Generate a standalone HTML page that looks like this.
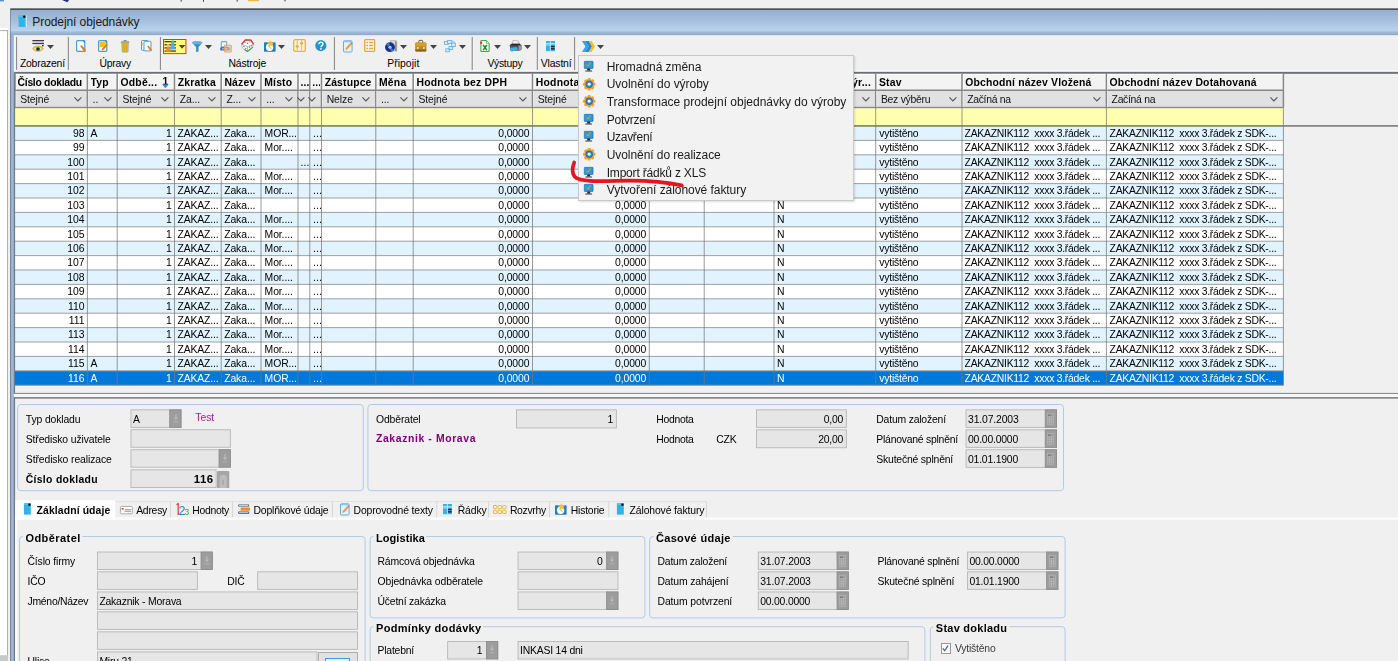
<!DOCTYPE html>
<html><head><meta charset="utf-8"><title>Prodejní objednávky</title>
<style>
html,body{margin:0;padding:0;}
body{width:1398px;height:661px;overflow:hidden;background:#f0f0f0;position:relative;font-family:"Liberation Sans",sans-serif;}
#r{position:absolute;left:0;top:0;width:1398px;height:661px;overflow:hidden;filter:blur(0.35px);}
#r div,#r svg{position:absolute;box-sizing:content-box;}
#r svg{overflow:visible;display:block;}
</style></head><body><div id="r">
<svg style="left:0;top:0" width="1398" height="661" viewBox="0 0 1398 661"><rect x="0.00" y="0.00" width="4.00" height="1.40" fill="#5a8fd0"/></svg>
<svg style="left:62.00px;top:0.00px" width="7.00" height="2.20" viewBox="0 0 7 2.2"><path d="M0,0h7l-1.5,2.2z" fill="#1c2f8a"/></svg>
<svg style="left:0;top:0" width="1398" height="661" viewBox="0 0 1398 661"><rect x="180.60" y="0.00" width="1.20" height="1.60" fill="#555"/><rect x="203.00" y="0.00" width="1.00" height="1.80" fill="#444"/><rect x="236.60" y="0.00" width="1.20" height="1.60" fill="#555"/><rect x="248.00" y="0.00" width="11.00" height="1.20" fill="#f0b840"/><rect x="284.40" y="0.00" width="1.20" height="1.40" fill="#555"/><rect x="0.00" y="28.00" width="8.00" height="2.20" fill="#fff"/><rect x="0.00" y="30.20" width="7.40" height="625.00" fill="#fff"/><rect x="0.00" y="30.20" width="8.00" height="0.90" fill="#a6a6a6"/><rect x="7.00" y="30.20" width="0.90" height="625.00" fill="#a6a6a6"/><rect x="0.00" y="655.20" width="8.00" height="6.00" fill="#c8c8c8"/></svg>
<div style="left:10.30px;top:9.00px;width:3.60px;height:652.00px;background:linear-gradient(90deg,#8a9fc0 0%,#97b1d3 35%,#a6c0e1 100%);"></div>
<div style="left:10.30px;top:9.60px;width:1388.00px;height:21.90px;background:linear-gradient(#96b0d2 0%,#a3bcdb 45%,#bad4ee 100%);"></div>
<div style="left:10.30px;top:31.40px;width:1388.00px;height:4.10px;background:linear-gradient(#aac4e2 0%,#9cb6d6 50%,#8fa8c9 100%);"></div>
<svg style="left:0;top:0" width="1398" height="661" viewBox="0 0 1398 661"><rect x="10.30" y="8.30" width="1388.00" height="1.70" fill="#4d5157"/><rect x="10.20" y="9.50" width="0.80" height="652.00" fill="rgba(90,100,120,0.55)"/></svg>
<svg style="left:18.00px;top:14.50px" width="9.20" height="11.90" viewBox="0 0 7.8 11.6"><rect x="0" y="0" width="7" height="11.6" fill="#2eb5e8"/><rect x="0.2" y="0.2" width="3.6" height="1.6" fill="#58c6ee"/><rect x="7" y="0.4" width="0.8" height="11.2" fill="#f4f8fb"/><circle cx="5.6" cy="1.7" r="1.2" fill="#101010"/></svg>
<div style="top:14.74px;font-size:12px;line-height:15.6px;color:#1a1a1a;letter-spacing:-0.08px;white-space:pre;left:32.30px;">Prodejní objednávky</div>
<svg style="left:0;top:0" width="1398" height="661" viewBox="0 0 1398 661"><rect x="14.10" y="35.50" width="1384.00" height="38.00" fill="#f0f0f0"/><rect x="14.10" y="35.40" width="1384.00" height="0.60" fill="#dcdcdc"/><rect x="14.10" y="35.60" width="1.00" height="37.00" fill="#fafafa"/><rect x="16.10" y="37.00" width="1.00" height="33.00" fill="#828282"/><rect x="67.80" y="37.00" width="1.00" height="33.00" fill="#828282"/><rect x="159.90" y="37.00" width="1.00" height="33.00" fill="#828282"/><rect x="333.90" y="37.00" width="1.00" height="33.00" fill="#828282"/><rect x="471.70" y="37.00" width="1.00" height="33.00" fill="#828282"/><rect x="536.80" y="37.00" width="1.00" height="33.00" fill="#828282"/><rect x="574.10" y="37.00" width="1.00" height="33.00" fill="#828282"/></svg>
<div style="top:56.94px;font-size:10.4px;line-height:13.52px;color:#000;letter-spacing:-0.203px;white-space:pre;left:19.90px;">Zobrazení</div>
<div style="top:56.94px;font-size:10.4px;line-height:13.52px;color:#000;letter-spacing:-0.24px;white-space:pre;left:99.40px;">Úpravy</div>
<div style="top:56.94px;font-size:10.4px;line-height:13.52px;color:#000;letter-spacing:-0.116px;white-space:pre;left:228.40px;">Nástroje</div>
<div style="top:56.94px;font-size:10.4px;line-height:13.52px;color:#000;letter-spacing:0.051px;white-space:pre;left:387.20px;">Připojit</div>
<div style="top:56.94px;font-size:10.4px;line-height:13.52px;color:#000;letter-spacing:-0.285px;white-space:pre;left:487.40px;">Výstupy</div>
<div style="top:56.94px;font-size:10.4px;line-height:13.52px;color:#000;letter-spacing:-0.156px;white-space:pre;left:540.80px;">Vlastní</div>
<svg style="left:32.20px;top:39.90px" width="12.00" height="13.00" viewBox="0 0 12 13"><rect x="0.4" y="0" width="11.6" height="1.3" fill="#3c3c3c"/><rect x="0.4" y="2.8" width="11.6" height="1.3" fill="#3c3c3c"/><path d="M0.2,8.6c2.4,-4.2 9,-4.2 11.6,-0.2c-2.6,4.6 -9.2,4.4 -11.6,0.2z" fill="#d4b236"/><path d="M1.6,8.8c2,-2.6 6.8,-2.6 8.8,0c-2,2.8 -6.8,2.8 -8.8,0z" fill="#eadb9a"/><circle cx="6" cy="9.1" r="2.0" fill="#1f5f82"/><circle cx="6" cy="9.1" r="1.0" fill="#0a1a24"/><circle cx="10.8" cy="5.6" r="0.9" fill="#222"/></svg>
<svg style="left:47.00px;top:45.00px" width="7.00" height="4.00" viewBox="0 0 7 4"><path d="M0,0H7L3.5,4Z" fill="#444"/></svg>
<svg style="left:75.80px;top:40.10px" width="10.00" height="12.00" viewBox="0 0 10 12"><rect x="0.6" y="0.6" width="8.2" height="10.8" rx="1" fill="#fff" stroke="#4a9fd6" stroke-width="1.2"/><path d="M6.5,0.6h2.3v2.6z" fill="#2b8ccf"/><path d="M4.4,6.4l1.3,-1.2l4,4.6l-0.1,2.2l-1.4,-0.6z" fill="#e07a1c"/><path d="M3.8,4.9l1.9,0.3l-1.3,1.2z" fill="#f3c98a"/></svg>
<svg style="left:97.50px;top:40.10px" width="10.00" height="12.00" viewBox="0 0 10 12"><rect x="0.6" y="0.6" width="8.2" height="10.8" rx="1" fill="#fff" stroke="#4a9fd6" stroke-width="1.2"/><path d="M1.4,1.4h5.4l1.4,1.6v4.2h-6.8z" fill="#f8c21c"/><path d="M6.5,0.6h2.3v2.6z" fill="#2b8ccf"/><path d="M3.6,10.6l0.5,-1.9l4.6,-4.9l1.1,1.3l-4.4,4.9z" fill="#e07a1c"/></svg>
<svg style="left:120.80px;top:39.80px" width="8.20" height="12.40" viewBox="0 0 8.2 12.4"><rect x="2.8" y="0" width="2.6" height="1.4" fill="#5a8fc0"/><rect x="0.2" y="1.3" width="7.8" height="1.8" rx="0.8" fill="#e8b820" stroke="#5a8fc0" stroke-width="0.5"/><path d="M0.8,3.2h6.6l-0.3,8.4a0.6,0.6 0 0 1 -0.6,0.6h-4.8a0.6,0.6 0 0 1 -0.6,-0.6z" fill="#ecbc22" stroke="#6a94b8" stroke-width="0.5"/><rect x="2.6" y="4.4" width="0.8" height="6.4" fill="#c59a1c"/><rect x="4.8" y="4.4" width="0.8" height="6.4" fill="#c59a1c"/></svg>
<svg style="left:140.80px;top:40.10px" width="10.80" height="11.60" viewBox="0 0 10.8 11.6"><rect x="0.5" y="0.5" width="6.6" height="9.8" rx="0.8" fill="#eaf3fb" stroke="#4a9fd6" stroke-width="1"/><rect x="0.9" y="3" width="0.8" height="2.4" fill="#f2c230"/><rect x="3" y="1.3" width="7" height="9.6" rx="0.8" fill="#fff" stroke="#4a9fd6" stroke-width="1"/><path d="M6.2,6.6l1.2,-1l3.2,3.8l-0.1,1.9l-1.3,-0.5z" fill="#e07a1c"/></svg>
<svg style="left:163.10px;top:38.80px" width="23.40" height="15.10" viewBox="0 0 23.4 15.1"><rect x="0.5" y="0.5" width="22.4" height="14.1" fill="#ffff7d" stroke="#ff2a1a" stroke-width="1"/><g fill="#1a1a1a"><rect x="1.4" y="2.2" width="11.6" height="1.1"/><rect x="1.4" y="5.3" width="11.6" height="1.1"/><rect x="1.4" y="8.4" width="11.6" height="1.1"/><rect x="1.4" y="11.5" width="11.6" height="1.1"/></g><path d="M4.2,7.6h2l0.4,1.6l1.4,3.6h-5.6l1.4,-3.6z" fill="#f28c28"/><circle cx="5.2" cy="6.6" r="1.5" fill="#f7b98a"/><path d="M8.6,3.6h2.2l0.4,2.2l1.4,4.6h-5.8l1.4,-4.6z" fill="#4ab0e6"/><circle cx="9.7" cy="2.9" r="1.6" fill="#4ab0e6"/><path d="M15.8,6.1h6.6l-3.3,3.6z" fill="#444"/></svg>
<svg style="left:191.70px;top:40.50px" width="10.60" height="11.20" viewBox="0 0 10.6 11.2"><path d="M0.2,1.6c0,-1.4 10.2,-1.4 10.2,0c0,1.2 -3.9,3.6 -3.9,5.2v3.6l-2.4,0.6v-4.2c0,-1.6 -3.9,-4 -3.9,-5.2z" fill="#2f8fd2"/><ellipse cx="5.3" cy="1.5" rx="4.9" ry="1.2" fill="#5cb4ea"/><path d="M0.6,2.2c1.5,1 8,1 9.4,0" stroke="#e8c040" stroke-width="0.5" fill="none"/></svg>
<svg style="left:205.30px;top:45.00px" width="7.00" height="4.00" viewBox="0 0 7 4"><path d="M0,0H7L3.5,4Z" fill="#444"/></svg>
<svg style="left:220.20px;top:40.60px" width="11.80" height="11.60" viewBox="0 0 11.8 11.6"><rect x="1.3" y="0.6" width="5.4" height="5.4" rx="0.6" fill="#eef5fd" stroke="#6aa6ee" stroke-width="1.1"/><rect x="0.2" y="6" width="9.6" height="3.6" rx="1.2" fill="#4470c4"/><rect x="2" y="7.2" width="5.6" height="1.2" fill="#a9c0ea"/><rect x="4.6" y="4.2" width="6.6" height="6.8" rx="0.8" fill="#f6c99a" fill-opacity="0.55" stroke="#e9a55a" stroke-width="1.1"/></svg>
<svg style="left:241.30px;top:39.30px" width="13.20" height="13.00" viewBox="0 0 13.2 13"><path d="M4.4,0.8l5.6,0.4l2.6,4.2l-1.4,3.6l-4.6,3.4l-5,-3.2l-1,-4z" fill="#fbfbfb" stroke="#9a9a9a" stroke-width="0.6"/><path d="M0.6,5.2l3.8,-4.4l5.6,0.4l2.6,4.2" fill="none" stroke="#cf3a3a" stroke-width="1.3"/><path d="M0.6,5.2l6,2.4l6,-2.2M6.6,7.6v4.8" stroke="#8a8a8a" stroke-width="0.6" fill="none"/><g fill="#6a6a6a"><circle cx="4" cy="3.2" r="0.6"/><circle cx="6.6" cy="4.4" r="0.6"/><circle cx="9" cy="3" r="0.6"/><circle cx="3" cy="7.4" r="0.6"/><circle cx="4.8" cy="9.4" r="0.6"/><circle cx="8.6" cy="8.2" r="0.6"/><circle cx="10.4" cy="6.8" r="0.6"/></g><path d="M3.6,10.6l2.8,1.9l5.4,-4.4" stroke="#3aa34a" stroke-width="1.2" fill="none"/></svg>
<svg style="left:263.60px;top:40.30px" width="11.60" height="11.80" viewBox="0 0 11.6 11.8"><rect x="0" y="2.2" width="11.6" height="9.6" rx="0.8" fill="#1f7fc4"/><circle cx="5.6" cy="7.2" r="3.7" fill="#fff"/><path d="M5.6,4.6v2.8l2,1.2" stroke="#8a8a8a" stroke-width="0.6" fill="none"/><path d="M6.2,0l1.3,2.2l2.6,0.3l-1.8,1.8l0.6,2.6l-2.4,-1.3l-2.6,1.5l0.8,-2.8l-1.8,-1.8l2.4,-0.3z" fill="#fbc02d"/></svg>
<svg style="left:278.20px;top:45.00px" width="7.00" height="4.00" viewBox="0 0 7 4"><path d="M0,0H7L3.5,4Z" fill="#444"/></svg>
<svg style="left:292.70px;top:39.30px" width="13.00" height="13.00" viewBox="0 0 13 13"><rect x="0.7" y="0.7" width="11.6" height="11.6" rx="1.6" fill="#fbf3dc" stroke="#e3b23c" stroke-width="1.3"/><path d="M4.2,1.4v10M8.6,1.4v10" stroke="#e3b23c" stroke-width="0.9"/><rect x="2.4" y="6.4" width="3.6" height="2" rx="1" fill="#e3b23c"/><rect x="6.8" y="3.2" width="3.6" height="2" rx="1" fill="#e3b23c"/></svg>
<svg style="left:315.10px;top:40.30px" width="11.60" height="11.20" viewBox="0 0 11.6 11.2"><circle cx="5.8" cy="5.6" r="5.6" fill="#1e96d6"/><path d="M3.9,4.2c0,-2.6 4,-2.6 4,-0.2c0,1.6 -1.9,1.6 -1.9,3.2" stroke="#fff" stroke-width="1.5" fill="none"/><rect x="5.2" y="8.1" width="1.5" height="1.5" fill="#fff"/></svg>
<svg style="left:343.40px;top:39.50px" width="9.60" height="12.50" viewBox="0 0 9.6 12.5"><rect x="0.5" y="0.8" width="8.6" height="11.2" rx="1" fill="#e6f1fb" stroke="#6da8de" stroke-width="1"/><rect x="1" y="0.6" width="7.6" height="1.7" fill="#9cc0e4"/><path d="M2.6,9.6l0.6,-2l4.2,-4.6l1.5,1.3l-4.2,4.7z" fill="#f0a030"/><path d="M7.4,3l1.5,1.3l0.5,-0.8l-1.3,-1.2z" fill="#e05a3a"/><path d="M2.6,9.6l0.3,-1l0.7,0.7z" fill="#555"/></svg>
<svg style="left:363.80px;top:39.40px" width="11.30" height="13.00" viewBox="0 0 11.3 13"><rect x="0.7" y="0.7" width="9.9" height="11.6" rx="0.8" fill="#fdf6e6" stroke="#e3a93c" stroke-width="1.3"/><g fill="#e3a93c"><rect x="2.4" y="2.8" width="1.6" height="1.4"/><rect x="5" y="2.8" width="4" height="1.4"/><rect x="2.4" y="5.8" width="1.6" height="1.4"/><rect x="5" y="5.8" width="4" height="1.4"/><rect x="2.4" y="8.8" width="1.6" height="1.4"/><rect x="5" y="8.8" width="4" height="1.4"/></g></svg>
<svg style="left:384.90px;top:40.00px" width="12.20" height="12.20" viewBox="0 0 12.2 12.2"><path d="M5.2,0.6h5.6a1,1 0 0 1 1,1v9.4h-3z" fill="#d8d8d8" stroke="#9a9a9a" stroke-width="0.5"/><rect x="10" y="1.4" width="1.6" height="9.8" fill="#8a8a8a"/><circle cx="5" cy="7.2" r="4.9" fill="#1b2f8a"/><path d="M5,7.2l-4,-2.8a4.9,4.9 0 0 1 3,-2z" fill="#3f78d8"/><path d="M5,7.2l4,2.8a4.9,4.9 0 0 1 -3,2z" fill="#3f78d8"/><circle cx="5" cy="7.2" r="1.5" fill="#e8e8f4"/><circle cx="5" cy="7.2" r="0.6" fill="#666"/></svg>
<svg style="left:400.00px;top:45.00px" width="7.00" height="4.00" viewBox="0 0 7 4"><path d="M0,0H7L3.5,4Z" fill="#444"/></svg>
<svg style="left:415.00px;top:40.00px" width="11.60" height="11.80" viewBox="0 0 11.6 11.8"><path d="M3.8,2.8v-1.4a1,1 0 0 1 1,-1h2a1,1 0 0 1 1,1v1.4" stroke="#6a4e10" stroke-width="1" fill="none"/><rect x="0.2" y="2.6" width="11.2" height="8.8" rx="1.2" fill="#b88a1c"/><rect x="0.2" y="2.6" width="11.2" height="3.6" rx="1.2" fill="#d0a030"/><rect x="0.2" y="9.6" width="11.2" height="1.8" rx="0.8" fill="#8a6410"/><rect x="2" y="7" width="1.6" height="2" fill="#cfe4f2"/><rect x="8" y="7" width="1.6" height="2" fill="#cfe4f2"/></svg>
<svg style="left:429.50px;top:45.00px" width="7.00" height="4.00" viewBox="0 0 7 4"><path d="M0,0H7L3.5,4Z" fill="#444"/></svg>
<svg style="left:444.20px;top:40.00px" width="12.00" height="12.20" viewBox="0 0 12 12.2"><rect x="0.4" y="1.4" width="4" height="3" fill="#d6ebfa" stroke="#62aee6" stroke-width="0.8"/><rect x="3.6" y="0.4" width="4.2" height="3" fill="#d6ebfa" stroke="#62aee6" stroke-width="0.8"/><rect x="7.4" y="3.2" width="4" height="3.4" fill="#d6ebfa" stroke="#62aee6" stroke-width="0.8"/><rect x="5" y="6.6" width="3.8" height="3" fill="#d6ebfa" stroke="#62aee6" stroke-width="0.8"/><rect x="1.8" y="8.8" width="3.6" height="3" fill="#d6ebfa" stroke="#62aee6" stroke-width="0.8"/><path d="M8,1.8h2.2v1.4M9.4,6.6l-1.6,1M5,9.2l-0.8,0.6" stroke="#62aee6" stroke-width="0.7" fill="none"/></svg>
<svg style="left:459.10px;top:45.00px" width="7.00" height="4.00" viewBox="0 0 7 4"><path d="M0,0H7L3.5,4Z" fill="#444"/></svg>
<svg style="left:479.50px;top:40.00px" width="9.60" height="12.00" viewBox="0 0 9.6 12"><path d="M0.9,0.6h5.6l2.6,2.6v8.2h-8.2z" fill="#fff" stroke="#3c9c3c" stroke-width="1"/><path d="M6.5,0.6v2.6h2.6" fill="#dff0df" stroke="#3c9c3c" stroke-width="0.6"/><path d="M3.2,5l3.6,5.2M6.8,5l-3.6,5.2" stroke="#1f8a2f" stroke-width="1.5"/><circle cx="1.2" cy="2.8" r="1.1" fill="#d8232a"/></svg>
<svg style="left:494.00px;top:45.00px" width="7.00" height="4.00" viewBox="0 0 7 4"><path d="M0,0H7L3.5,4Z" fill="#444"/></svg>
<svg style="left:509.00px;top:40.00px" width="13.00" height="12.00" viewBox="0 0 13 12"><path d="M4,0.4l5.4,0.6l1,3.6h-7.4z" fill="#f2f2f2" stroke="#8a8a8a" stroke-width="0.5"/><path d="M0.6,5.2l2.4,-1.4h7.6l2,1.8v3.6l-1.6,1.6h-9.4z" fill="#555"/><path d="M0.6,5.2l2.4,-1.4h7.6l2,1.8h-9.8z" fill="#2b2b2b"/><path d="M9.6,5.6h3v3.6l-1.6,1.6h-1.4z" fill="#9a9a9a"/><path d="M1.8,7.8l5.6,-0.8l1.6,2.4l-6.2,2.4l-2,-1.6z" fill="#2fb4e4"/></svg>
<svg style="left:524.00px;top:45.00px" width="7.00" height="4.00" viewBox="0 0 7 4"><path d="M0,0H7L3.5,4Z" fill="#444"/></svg>
<svg style="left:546.00px;top:40.80px" width="9.50" height="10.20" viewBox="0 0 9.5 10.2"><rect x="0" y="0" width="9" height="10.2" fill="#2db6e8"/><path d="M0,2.6h9M0,4h9M4.4,0v10.2" stroke="#e8f6fd" stroke-width="0.7"/><rect x="5" y="4.6" width="3.6" height="1.6" fill="#14303c"/><rect x="5" y="7" width="3.6" height="1.6" fill="#14303c"/><rect x="9" y="0.3" width="0.5" height="10" fill="#fff"/></svg>
<svg style="left:581.60px;top:40.80px" width="13.00" height="11.00" viewBox="0 0 13 11"><path d="M0,0h3.4l3.4,5.5l-3.4,5.5h-3.4l3.4,-5.5z" fill="#3aa0ea"/><path d="M3.3,0h3.4l3.4,5.5l-3.4,5.5h-3.4l3.4,-5.5z" fill="#2a84d0"/><path d="M6.6,0h3l3.4,5.5l-3.4,5.5h-3l3.4,-5.5z" fill="#f4c020"/></svg>
<svg style="left:596.60px;top:45.00px" width="7.00" height="4.00" viewBox="0 0 7 4"><path d="M0,0H7L3.5,4Z" fill="#444"/></svg>
<svg style="left:0;top:0" width="1398" height="661" viewBox="0 0 1398 661"><rect x="15.00" y="73.60" width="1268.40" height="16.60" fill="#f3f3f3"/><rect x="15.00" y="90.20" width="1268.40" height="17.00" fill="#e1e1e1"/><rect x="15.00" y="107.20" width="1268.40" height="18.40" fill="#ffffae"/><rect x="15.00" y="126.00" width="1268.40" height="14.40" fill="#e0f3ff"/><rect x="15.00" y="140.40" width="1268.40" height="14.40" fill="#ffffff"/><rect x="15.00" y="154.80" width="1268.40" height="14.40" fill="#e0f3ff"/><rect x="15.00" y="169.20" width="1268.40" height="14.40" fill="#ffffff"/><rect x="15.00" y="183.60" width="1268.40" height="14.40" fill="#e0f3ff"/><rect x="15.00" y="198.00" width="1268.40" height="14.40" fill="#ffffff"/><rect x="15.00" y="212.40" width="1268.40" height="14.40" fill="#e0f3ff"/><rect x="15.00" y="226.80" width="1268.40" height="14.40" fill="#ffffff"/><rect x="15.00" y="241.20" width="1268.40" height="14.40" fill="#e0f3ff"/><rect x="15.00" y="255.60" width="1268.40" height="14.40" fill="#ffffff"/><rect x="15.00" y="270.00" width="1268.40" height="14.40" fill="#e0f3ff"/><rect x="15.00" y="284.40" width="1268.40" height="14.40" fill="#ffffff"/><rect x="15.00" y="298.80" width="1268.40" height="14.40" fill="#e0f3ff"/><rect x="15.00" y="313.20" width="1268.40" height="14.40" fill="#ffffff"/><rect x="15.00" y="327.60" width="1268.40" height="14.40" fill="#e0f3ff"/><rect x="15.00" y="342.00" width="1268.40" height="14.40" fill="#ffffff"/><rect x="15.00" y="356.40" width="1268.40" height="14.40" fill="#e0f3ff"/><rect x="15.00" y="370.80" width="1268.40" height="14.40" fill="#0078d7"/><rect x="14.30" y="70.10" width="1384.00" height="1.00" fill="#f8f8f8"/><rect x="14.30" y="71.90" width="1384.00" height="1.90" fill="#6c7074"/><rect x="15.00" y="89.50" width="1268.40" height="1.50" fill="#868686"/><rect x="15.00" y="106.80" width="1268.40" height="1.40" fill="#8a8a8a"/><rect x="15.00" y="125.00" width="1383.00" height="1.80" fill="#888888"/><rect x="15.00" y="139.90" width="1268.40" height="1.00" fill="#a0a0a0"/><rect x="15.00" y="154.30" width="1268.40" height="1.00" fill="#a0a0a0"/><rect x="15.00" y="168.70" width="1268.40" height="1.00" fill="#a0a0a0"/><rect x="15.00" y="183.10" width="1268.40" height="1.00" fill="#a0a0a0"/><rect x="15.00" y="197.50" width="1268.40" height="1.00" fill="#a0a0a0"/><rect x="15.00" y="211.90" width="1268.40" height="1.00" fill="#a0a0a0"/><rect x="15.00" y="226.30" width="1268.40" height="1.00" fill="#a0a0a0"/><rect x="15.00" y="240.70" width="1268.40" height="1.00" fill="#a0a0a0"/><rect x="15.00" y="255.10" width="1268.40" height="1.00" fill="#a0a0a0"/><rect x="15.00" y="269.50" width="1268.40" height="1.00" fill="#a0a0a0"/><rect x="15.00" y="283.90" width="1268.40" height="1.00" fill="#a0a0a0"/><rect x="15.00" y="298.30" width="1268.40" height="1.00" fill="#a0a0a0"/><rect x="15.00" y="312.70" width="1268.40" height="1.00" fill="#a0a0a0"/><rect x="15.00" y="327.10" width="1268.40" height="1.00" fill="#a0a0a0"/><rect x="15.00" y="341.50" width="1268.40" height="1.00" fill="#a0a0a0"/><rect x="15.00" y="355.90" width="1268.40" height="1.00" fill="#a0a0a0"/><rect x="15.00" y="370.30" width="1268.40" height="1.00" fill="#a0a0a0"/><rect x="15.00" y="384.70" width="1268.40" height="1.00" fill="#8c8c8c"/><rect x="15.60" y="73.90" width="71.40" height="1.00" fill="#ffffff"/><rect x="15.60" y="73.90" width="1.00" height="15.60" fill="#ffffff"/><rect x="88.00" y="73.90" width="28.80" height="1.00" fill="#ffffff"/><rect x="88.00" y="73.90" width="1.00" height="15.60" fill="#ffffff"/><rect x="117.80" y="73.90" width="56.30" height="1.00" fill="#ffffff"/><rect x="117.80" y="73.90" width="1.00" height="15.60" fill="#ffffff"/><rect x="175.10" y="73.90" width="45.70" height="1.00" fill="#ffffff"/><rect x="175.10" y="73.90" width="1.00" height="15.60" fill="#ffffff"/><rect x="221.80" y="73.90" width="38.80" height="1.00" fill="#ffffff"/><rect x="221.80" y="73.90" width="1.00" height="15.60" fill="#ffffff"/><rect x="261.60" y="73.90" width="36.00" height="1.00" fill="#ffffff"/><rect x="261.60" y="73.90" width="1.00" height="15.60" fill="#ffffff"/><rect x="298.60" y="73.90" width="10.80" height="1.00" fill="#ffffff"/><rect x="298.60" y="73.90" width="1.00" height="15.60" fill="#ffffff"/><rect x="310.40" y="73.90" width="10.70" height="1.00" fill="#ffffff"/><rect x="310.40" y="73.90" width="1.00" height="15.60" fill="#ffffff"/><rect x="322.10" y="73.90" width="53.30" height="1.00" fill="#ffffff"/><rect x="322.10" y="73.90" width="1.00" height="15.60" fill="#ffffff"/><rect x="376.40" y="73.90" width="36.40" height="1.00" fill="#ffffff"/><rect x="376.40" y="73.90" width="1.00" height="15.60" fill="#ffffff"/><rect x="413.80" y="73.90" width="118.30" height="1.00" fill="#ffffff"/><rect x="413.80" y="73.90" width="1.00" height="15.60" fill="#ffffff"/><rect x="533.10" y="73.90" width="115.80" height="1.00" fill="#ffffff"/><rect x="533.10" y="73.90" width="1.00" height="15.60" fill="#ffffff"/><rect x="649.90" y="73.90" width="53.90" height="1.00" fill="#ffffff"/><rect x="649.90" y="73.90" width="1.00" height="15.60" fill="#ffffff"/><rect x="704.80" y="73.90" width="68.80" height="1.00" fill="#ffffff"/><rect x="704.80" y="73.90" width="1.00" height="15.60" fill="#ffffff"/><rect x="774.60" y="73.90" width="100.70" height="1.00" fill="#ffffff"/><rect x="774.60" y="73.90" width="1.00" height="15.60" fill="#ffffff"/><rect x="876.30" y="73.90" width="85.30" height="1.00" fill="#ffffff"/><rect x="876.30" y="73.90" width="1.00" height="15.60" fill="#ffffff"/><rect x="962.60" y="73.90" width="143.40" height="1.00" fill="#ffffff"/><rect x="962.60" y="73.90" width="1.00" height="15.60" fill="#ffffff"/><rect x="1107.00" y="73.90" width="176.00" height="1.00" fill="#ffffff"/><rect x="1107.00" y="73.90" width="1.00" height="15.60" fill="#ffffff"/><rect x="14.25" y="73.60" width="1.50" height="33.60" fill="#888888"/><rect x="15.70" y="90.90" width="0.80" height="16.00" fill="#efefef"/><rect x="86.65" y="73.60" width="1.50" height="33.60" fill="#888888"/><rect x="88.10" y="90.90" width="0.80" height="16.00" fill="#efefef"/><rect x="86.90" y="107.20" width="1.00" height="278.00" fill="rgba(122,122,122,0.757)"/><rect x="116.45" y="73.60" width="1.50" height="33.60" fill="#888888"/><rect x="117.90" y="90.90" width="0.80" height="16.00" fill="#efefef"/><rect x="116.70" y="107.20" width="1.00" height="278.00" fill="rgba(122,122,122,0.757)"/><rect x="173.75" y="73.60" width="1.50" height="33.60" fill="#888888"/><rect x="175.20" y="90.90" width="0.80" height="16.00" fill="#efefef"/><rect x="174.00" y="107.20" width="1.00" height="278.00" fill="rgba(122,122,122,0.757)"/><rect x="220.45" y="73.60" width="1.50" height="33.60" fill="#888888"/><rect x="221.90" y="90.90" width="0.80" height="16.00" fill="#efefef"/><rect x="220.70" y="107.20" width="1.00" height="278.00" fill="rgba(122,122,122,0.757)"/><rect x="260.25" y="73.60" width="1.50" height="33.60" fill="#888888"/><rect x="261.70" y="90.90" width="0.80" height="16.00" fill="#efefef"/><rect x="260.50" y="107.20" width="1.00" height="278.00" fill="rgba(122,122,122,0.757)"/><rect x="297.25" y="73.60" width="1.50" height="33.60" fill="#888888"/><rect x="298.70" y="90.90" width="0.80" height="16.00" fill="#efefef"/><rect x="297.50" y="107.20" width="1.00" height="278.00" fill="rgba(122,122,122,0.757)"/><rect x="309.05" y="73.60" width="1.50" height="33.60" fill="#888888"/><rect x="310.50" y="90.90" width="0.80" height="16.00" fill="#efefef"/><rect x="309.30" y="107.20" width="1.00" height="278.00" fill="rgba(122,122,122,0.757)"/><rect x="320.75" y="73.60" width="1.50" height="33.60" fill="#888888"/><rect x="322.20" y="90.90" width="0.80" height="16.00" fill="#efefef"/><rect x="321.00" y="107.20" width="1.00" height="278.00" fill="rgba(122,122,122,0.757)"/><rect x="375.05" y="73.60" width="1.50" height="33.60" fill="#888888"/><rect x="376.50" y="90.90" width="0.80" height="16.00" fill="#efefef"/><rect x="375.30" y="107.20" width="1.00" height="278.00" fill="rgba(122,122,122,0.757)"/><rect x="412.45" y="73.60" width="1.50" height="33.60" fill="#888888"/><rect x="413.90" y="90.90" width="0.80" height="16.00" fill="#efefef"/><rect x="412.70" y="107.20" width="1.00" height="278.00" fill="rgba(122,122,122,0.757)"/><rect x="531.75" y="73.60" width="1.50" height="33.60" fill="#888888"/><rect x="533.20" y="90.90" width="0.80" height="16.00" fill="#efefef"/><rect x="532.00" y="107.20" width="1.00" height="278.00" fill="rgba(122,122,122,0.757)"/><rect x="648.55" y="73.60" width="1.50" height="33.60" fill="#888888"/><rect x="650.00" y="90.90" width="0.80" height="16.00" fill="#efefef"/><rect x="648.80" y="107.20" width="1.00" height="278.00" fill="rgba(122,122,122,0.757)"/><rect x="703.45" y="73.60" width="1.50" height="33.60" fill="#888888"/><rect x="704.90" y="90.90" width="0.80" height="16.00" fill="#efefef"/><rect x="703.70" y="107.20" width="1.00" height="278.00" fill="rgba(122,122,122,0.757)"/><rect x="773.25" y="73.60" width="1.50" height="33.60" fill="#888888"/><rect x="774.70" y="90.90" width="0.80" height="16.00" fill="#efefef"/><rect x="773.50" y="107.20" width="1.00" height="278.00" fill="rgba(122,122,122,0.757)"/><rect x="874.95" y="73.60" width="1.50" height="33.60" fill="#888888"/><rect x="876.40" y="90.90" width="0.80" height="16.00" fill="#efefef"/><rect x="875.20" y="107.20" width="1.00" height="278.00" fill="rgba(122,122,122,0.757)"/><rect x="961.25" y="73.60" width="1.50" height="33.60" fill="#888888"/><rect x="962.70" y="90.90" width="0.80" height="16.00" fill="#efefef"/><rect x="961.50" y="107.20" width="1.00" height="278.00" fill="rgba(122,122,122,0.757)"/><rect x="1105.65" y="73.60" width="1.50" height="33.60" fill="#888888"/><rect x="1107.10" y="90.90" width="0.80" height="16.00" fill="#efefef"/><rect x="1105.90" y="107.20" width="1.00" height="278.00" fill="rgba(122,122,122,0.757)"/><rect x="1282.65" y="73.60" width="1.50" height="33.60" fill="#888888"/><rect x="1282.90" y="107.20" width="1.00" height="278.00" fill="rgba(122,122,122,0.757)"/><rect x="13.70" y="72.40" width="1.40" height="321.60" fill="#767a80"/></svg>
<div style="top:76.14px;font-size:10.4px;line-height:13.52px;color:#000;letter-spacing:-0.3px;white-space:pre;font-weight:bold;left:17.60px;width:68.80px;overflow:hidden;">Číslo dokladu</div>
<div style="top:76.14px;font-size:10.4px;line-height:13.52px;color:#000;letter-spacing:0.2px;white-space:pre;font-weight:bold;left:90.60px;width:25.60px;overflow:hidden;">Typ</div>
<div style="top:76.14px;font-size:10.4px;line-height:13.52px;color:#000;letter-spacing:0.25px;white-space:pre;font-weight:bold;left:120.40px;width:53.10px;overflow:hidden;">Odbě...</div>
<div style="top:76.14px;font-size:10.4px;line-height:13.52px;color:#000;letter-spacing:0.2px;white-space:pre;font-weight:bold;left:177.70px;width:42.50px;overflow:hidden;">Zkratka</div>
<div style="top:76.14px;font-size:10.4px;line-height:13.52px;color:#000;letter-spacing:0.2px;white-space:pre;font-weight:bold;left:224.40px;width:35.60px;overflow:hidden;">Název</div>
<div style="top:76.14px;font-size:10.4px;line-height:13.52px;color:#000;letter-spacing:0.2px;white-space:pre;font-weight:bold;left:264.20px;width:32.80px;overflow:hidden;">Místo</div>
<div style="top:76.14px;font-size:10.4px;line-height:13.52px;color:#000;letter-spacing:0.2px;white-space:pre;font-weight:bold;left:300.40px;width:8.40px;overflow:hidden;">...</div>
<div style="top:76.14px;font-size:10.4px;line-height:13.52px;color:#000;letter-spacing:0.2px;white-space:pre;font-weight:bold;left:312.20px;width:8.30px;overflow:hidden;">...</div>
<div style="top:76.14px;font-size:10.4px;line-height:13.52px;color:#000;letter-spacing:0.15px;white-space:pre;font-weight:bold;left:324.70px;width:50.10px;overflow:hidden;">Zástupce</div>
<div style="top:76.14px;font-size:10.4px;line-height:13.52px;color:#000;letter-spacing:0.2px;white-space:pre;font-weight:bold;left:379.00px;width:33.20px;overflow:hidden;">Měna</div>
<div style="top:76.14px;font-size:10.4px;line-height:13.52px;color:#000;letter-spacing:0.25px;white-space:pre;font-weight:bold;left:416.40px;width:115.10px;overflow:hidden;">Hodnota bez DPH</div>
<div style="top:76.14px;font-size:10.4px;line-height:13.52px;color:#000;letter-spacing:0.25px;white-space:pre;font-weight:bold;left:535.70px;width:112.60px;overflow:hidden;">Hodnota</div>
<div style="top:76.14px;font-size:10.4px;line-height:13.52px;color:#000;letter-spacing:0.2px;white-space:pre;font-weight:bold;right:527.00px;text-align:right;">do výr...</div>
<div style="top:76.14px;font-size:10.4px;line-height:13.52px;color:#000;letter-spacing:0.25px;white-space:pre;font-weight:bold;left:878.90px;width:82.10px;overflow:hidden;">Stav</div>
<div style="top:76.14px;font-size:10.4px;line-height:13.52px;color:#000;letter-spacing:0.18px;white-space:pre;font-weight:bold;left:965.20px;width:140.20px;overflow:hidden;">Obchodní název Vložená</div>
<div style="top:76.14px;font-size:10.4px;line-height:13.52px;color:#000;letter-spacing:0.18px;white-space:pre;font-weight:bold;left:1109.60px;width:172.80px;overflow:hidden;">Obchodní název Dotahovaná</div>
<div style="top:74.74px;font-size:10.4px;line-height:13.52px;color:#000;letter-spacing:0px;white-space:pre;font-weight:bold;left:162.40px;">1</div>
<svg style="left:161.80px;top:83.80px" width="6.80" height="4.40" viewBox="0 0 6.4 3.8"><path d="M0,0h6.4l-3.2,3.8z" fill="#2f8fe0"/></svg>
<div style="top:93.14px;font-size:10.4px;line-height:13.52px;color:#111;letter-spacing:-0.08px;white-space:pre;left:20.20px;">Stejné</div>
<div style="top:93.14px;font-size:10.4px;line-height:13.52px;color:#111;letter-spacing:-0.08px;white-space:pre;left:92.60px;">..</div>
<div style="top:93.14px;font-size:10.4px;line-height:13.52px;color:#111;letter-spacing:-0.08px;white-space:pre;left:122.40px;">Stejné</div>
<div style="top:93.14px;font-size:10.4px;line-height:13.52px;color:#111;letter-spacing:-0.08px;white-space:pre;left:179.70px;">Za...</div>
<div style="top:93.14px;font-size:10.4px;line-height:13.52px;color:#111;letter-spacing:-0.08px;white-space:pre;left:226.40px;">Z...</div>
<div style="top:93.14px;font-size:10.4px;line-height:13.52px;color:#111;letter-spacing:-0.08px;white-space:pre;left:266.20px;">...</div>
<div style="top:93.14px;font-size:10.4px;line-height:13.52px;color:#111;letter-spacing:-0.08px;white-space:pre;left:326.70px;">Nelze</div>
<div style="top:93.14px;font-size:10.4px;line-height:13.52px;color:#111;letter-spacing:-0.08px;white-space:pre;left:381.00px;">...</div>
<div style="top:93.14px;font-size:10.4px;line-height:13.52px;color:#111;letter-spacing:-0.08px;white-space:pre;left:418.40px;">Stejné</div>
<div style="top:93.14px;font-size:10.4px;line-height:13.52px;color:#111;letter-spacing:-0.08px;white-space:pre;left:537.70px;">Stejné</div>
<div style="top:93.14px;font-size:10.4px;line-height:13.52px;color:#111;letter-spacing:-0.263px;white-space:pre;left:880.90px;">Bez výběru</div>
<div style="top:93.14px;font-size:10.4px;line-height:13.52px;color:#111;letter-spacing:-0.3px;white-space:pre;left:967.20px;">Začíná na</div>
<div style="top:93.14px;font-size:10.4px;line-height:13.52px;color:#111;letter-spacing:-0.3px;white-space:pre;left:1111.60px;">Začíná na</div>
<svg style="left:73.90px;top:96.90px" width="7.80" height="4.60" viewBox="0 0 7.8 4.6"><path d="M0.4,0.4l3.5,3.6l3.5,-3.6" stroke="#555" stroke-width="1.1" fill="none"/></svg>
<svg style="left:103.70px;top:96.90px" width="7.80" height="4.60" viewBox="0 0 7.8 4.6"><path d="M0.4,0.4l3.5,3.6l3.5,-3.6" stroke="#555" stroke-width="1.1" fill="none"/></svg>
<svg style="left:161.00px;top:96.90px" width="7.80" height="4.60" viewBox="0 0 7.8 4.6"><path d="M0.4,0.4l3.5,3.6l3.5,-3.6" stroke="#555" stroke-width="1.1" fill="none"/></svg>
<svg style="left:207.70px;top:96.90px" width="7.80" height="4.60" viewBox="0 0 7.8 4.6"><path d="M0.4,0.4l3.5,3.6l3.5,-3.6" stroke="#555" stroke-width="1.1" fill="none"/></svg>
<svg style="left:247.50px;top:96.90px" width="7.80" height="4.60" viewBox="0 0 7.8 4.6"><path d="M0.4,0.4l3.5,3.6l3.5,-3.6" stroke="#555" stroke-width="1.1" fill="none"/></svg>
<svg style="left:284.50px;top:96.90px" width="7.80" height="4.60" viewBox="0 0 7.8 4.6"><path d="M0.4,0.4l3.5,3.6l3.5,-3.6" stroke="#555" stroke-width="1.1" fill="none"/></svg>
<svg style="left:362.30px;top:96.90px" width="7.80" height="4.60" viewBox="0 0 7.8 4.6"><path d="M0.4,0.4l3.5,3.6l3.5,-3.6" stroke="#555" stroke-width="1.1" fill="none"/></svg>
<svg style="left:399.70px;top:96.90px" width="7.80" height="4.60" viewBox="0 0 7.8 4.6"><path d="M0.4,0.4l3.5,3.6l3.5,-3.6" stroke="#555" stroke-width="1.1" fill="none"/></svg>
<svg style="left:519.00px;top:96.90px" width="7.80" height="4.60" viewBox="0 0 7.8 4.6"><path d="M0.4,0.4l3.5,3.6l3.5,-3.6" stroke="#555" stroke-width="1.1" fill="none"/></svg>
<svg style="left:862.20px;top:96.90px" width="7.80" height="4.60" viewBox="0 0 7.8 4.6"><path d="M0.4,0.4l3.5,3.6l3.5,-3.6" stroke="#555" stroke-width="1.1" fill="none"/></svg>
<svg style="left:948.50px;top:96.90px" width="7.80" height="4.60" viewBox="0 0 7.8 4.6"><path d="M0.4,0.4l3.5,3.6l3.5,-3.6" stroke="#555" stroke-width="1.1" fill="none"/></svg>
<svg style="left:1092.90px;top:96.90px" width="7.80" height="4.60" viewBox="0 0 7.8 4.6"><path d="M0.4,0.4l3.5,3.6l3.5,-3.6" stroke="#555" stroke-width="1.1" fill="none"/></svg>
<svg style="left:1269.90px;top:96.90px" width="7.80" height="4.60" viewBox="0 0 7.8 4.6"><path d="M0.4,0.4l3.5,3.6l3.5,-3.6" stroke="#555" stroke-width="1.1" fill="none"/></svg>
<svg style="left:298.60px;top:96.90px" width="5.40" height="4.60" viewBox="0 0 5.4 4.6"><path d="M-1.6,0.4l3.5,3.6l3.5,-3.6" stroke="#555" stroke-width="1.1" fill="none"/></svg>
<svg style="left:310.40px;top:96.90px" width="5.40" height="4.60" viewBox="0 0 5.4 4.6"><path d="M-1.6,0.4l3.5,3.6l3.5,-3.6" stroke="#555" stroke-width="1.1" fill="none"/></svg>
<div style="top:126.89px;font-size:10.4px;line-height:13.52px;color:#000;letter-spacing:-0.05px;white-space:pre;right:1313.55px;text-align:right;">98</div>
<div style="top:126.89px;font-size:10.4px;line-height:13.52px;color:#000;letter-spacing:-0.2px;white-space:pre;left:90.60px;">A</div>
<div style="top:126.89px;font-size:10.4px;line-height:13.52px;color:#000;letter-spacing:-0.2px;white-space:pre;right:1226.50px;text-align:right;">1</div>
<div style="top:126.89px;font-size:10.4px;line-height:13.52px;color:#000;letter-spacing:-0.15px;white-space:pre;left:177.50px;">ZAKAZ...</div>
<div style="top:126.89px;font-size:10.4px;line-height:13.52px;color:#000;letter-spacing:-0.1px;white-space:pre;left:224.20px;">Zaka...</div>
<div style="top:126.89px;font-size:10.4px;line-height:13.52px;color:#000;letter-spacing:-0.1px;white-space:pre;left:264.60px;">MOR...</div>
<div style="top:126.89px;font-size:10.4px;line-height:13.52px;color:#000;letter-spacing:0.1px;white-space:pre;left:313.00px;">...</div>
<div style="top:126.89px;font-size:10.4px;line-height:13.52px;color:#000;letter-spacing:-0.1px;white-space:pre;right:868.60px;text-align:right;">0,0000</div>
<div style="top:126.89px;font-size:10.4px;line-height:13.52px;color:#000;letter-spacing:-0.1px;white-space:pre;right:751.80px;text-align:right;">0,0000</div>
<div style="top:126.89px;font-size:10.4px;line-height:13.52px;color:#000;letter-spacing:-0.2px;white-space:pre;left:777.00px;">N</div>
<div style="top:126.89px;font-size:10.4px;line-height:13.52px;color:#000;letter-spacing:-0.216px;white-space:pre;left:879.30px;">vytištěno</div>
<div style="top:126.89px;font-size:10.4px;line-height:13.52px;color:#000;letter-spacing:-0.26px;white-space:pre;left:964.60px;width:141.00px;overflow:hidden;">ZAKAZNIK112  xxxx 3.řádek ...</div>
<div style="top:126.89px;font-size:10.4px;line-height:13.52px;color:#000;letter-spacing:-0.26px;white-space:pre;left:1109.60px;">ZAKAZNIK112  xxxx 3.řádek z SDK-...</div>
<div style="top:141.29px;font-size:10.4px;line-height:13.52px;color:#000;letter-spacing:-0.05px;white-space:pre;right:1313.55px;text-align:right;">99</div>
<div style="top:141.29px;font-size:10.4px;line-height:13.52px;color:#000;letter-spacing:-0.2px;white-space:pre;right:1226.50px;text-align:right;">1</div>
<div style="top:141.29px;font-size:10.4px;line-height:13.52px;color:#000;letter-spacing:-0.15px;white-space:pre;left:177.50px;">ZAKAZ...</div>
<div style="top:141.29px;font-size:10.4px;line-height:13.52px;color:#000;letter-spacing:-0.1px;white-space:pre;left:224.20px;">Zaka...</div>
<div style="top:141.29px;font-size:10.4px;line-height:13.52px;color:#000;letter-spacing:-0.1px;white-space:pre;left:264.60px;">Mor....</div>
<div style="top:141.29px;font-size:10.4px;line-height:13.52px;color:#000;letter-spacing:0.1px;white-space:pre;left:313.00px;">...</div>
<div style="top:141.29px;font-size:10.4px;line-height:13.52px;color:#000;letter-spacing:-0.1px;white-space:pre;right:868.60px;text-align:right;">0,0000</div>
<div style="top:141.29px;font-size:10.4px;line-height:13.52px;color:#000;letter-spacing:-0.1px;white-space:pre;right:751.80px;text-align:right;">0,0000</div>
<div style="top:141.29px;font-size:10.4px;line-height:13.52px;color:#000;letter-spacing:-0.2px;white-space:pre;left:777.00px;">N</div>
<div style="top:141.29px;font-size:10.4px;line-height:13.52px;color:#000;letter-spacing:-0.216px;white-space:pre;left:879.30px;">vytištěno</div>
<div style="top:141.29px;font-size:10.4px;line-height:13.52px;color:#000;letter-spacing:-0.26px;white-space:pre;left:964.60px;width:141.00px;overflow:hidden;">ZAKAZNIK112  xxxx 3.řádek ...</div>
<div style="top:141.29px;font-size:10.4px;line-height:13.52px;color:#000;letter-spacing:-0.26px;white-space:pre;left:1109.60px;">ZAKAZNIK112  xxxx 3.řádek z SDK-...</div>
<div style="top:155.69px;font-size:10.4px;line-height:13.52px;color:#000;letter-spacing:-0.05px;white-space:pre;right:1313.55px;text-align:right;">100</div>
<div style="top:155.69px;font-size:10.4px;line-height:13.52px;color:#000;letter-spacing:-0.2px;white-space:pre;right:1226.50px;text-align:right;">1</div>
<div style="top:155.69px;font-size:10.4px;line-height:13.52px;color:#000;letter-spacing:-0.15px;white-space:pre;left:177.50px;">ZAKAZ...</div>
<div style="top:155.69px;font-size:10.4px;line-height:13.52px;color:#000;letter-spacing:-0.1px;white-space:pre;left:224.20px;">Zaka...</div>
<div style="top:155.69px;font-size:10.4px;line-height:13.52px;color:#000;letter-spacing:0.1px;white-space:pre;left:300.60px;">...</div>
<div style="top:155.69px;font-size:10.4px;line-height:13.52px;color:#000;letter-spacing:0.1px;white-space:pre;left:313.00px;">...</div>
<div style="top:155.69px;font-size:10.4px;line-height:13.52px;color:#000;letter-spacing:-0.1px;white-space:pre;right:868.60px;text-align:right;">0,0000</div>
<div style="top:155.69px;font-size:10.4px;line-height:13.52px;color:#000;letter-spacing:-0.1px;white-space:pre;right:751.80px;text-align:right;">0,0000</div>
<div style="top:155.69px;font-size:10.4px;line-height:13.52px;color:#000;letter-spacing:-0.2px;white-space:pre;left:777.00px;">N</div>
<div style="top:155.69px;font-size:10.4px;line-height:13.52px;color:#000;letter-spacing:-0.216px;white-space:pre;left:879.30px;">vytištěno</div>
<div style="top:155.69px;font-size:10.4px;line-height:13.52px;color:#000;letter-spacing:-0.26px;white-space:pre;left:964.60px;width:141.00px;overflow:hidden;">ZAKAZNIK112  xxxx 3.řádek ...</div>
<div style="top:155.69px;font-size:10.4px;line-height:13.52px;color:#000;letter-spacing:-0.26px;white-space:pre;left:1109.60px;">ZAKAZNIK112  xxxx 3.řádek z SDK-...</div>
<div style="top:170.09px;font-size:10.4px;line-height:13.52px;color:#000;letter-spacing:-0.05px;white-space:pre;right:1313.55px;text-align:right;">101</div>
<div style="top:170.09px;font-size:10.4px;line-height:13.52px;color:#000;letter-spacing:-0.2px;white-space:pre;right:1226.50px;text-align:right;">1</div>
<div style="top:170.09px;font-size:10.4px;line-height:13.52px;color:#000;letter-spacing:-0.15px;white-space:pre;left:177.50px;">ZAKAZ...</div>
<div style="top:170.09px;font-size:10.4px;line-height:13.52px;color:#000;letter-spacing:-0.1px;white-space:pre;left:224.20px;">Zaka...</div>
<div style="top:170.09px;font-size:10.4px;line-height:13.52px;color:#000;letter-spacing:-0.1px;white-space:pre;left:264.60px;">Mor....</div>
<div style="top:170.09px;font-size:10.4px;line-height:13.52px;color:#000;letter-spacing:0.1px;white-space:pre;left:313.00px;">...</div>
<div style="top:170.09px;font-size:10.4px;line-height:13.52px;color:#000;letter-spacing:-0.1px;white-space:pre;right:868.60px;text-align:right;">0,0000</div>
<div style="top:170.09px;font-size:10.4px;line-height:13.52px;color:#000;letter-spacing:-0.1px;white-space:pre;right:751.80px;text-align:right;">0,0000</div>
<div style="top:170.09px;font-size:10.4px;line-height:13.52px;color:#000;letter-spacing:-0.2px;white-space:pre;left:777.00px;">N</div>
<div style="top:170.09px;font-size:10.4px;line-height:13.52px;color:#000;letter-spacing:-0.216px;white-space:pre;left:879.30px;">vytištěno</div>
<div style="top:170.09px;font-size:10.4px;line-height:13.52px;color:#000;letter-spacing:-0.26px;white-space:pre;left:964.60px;width:141.00px;overflow:hidden;">ZAKAZNIK112  xxxx 3.řádek ...</div>
<div style="top:170.09px;font-size:10.4px;line-height:13.52px;color:#000;letter-spacing:-0.26px;white-space:pre;left:1109.60px;">ZAKAZNIK112  xxxx 3.řádek z SDK-...</div>
<div style="top:184.49px;font-size:10.4px;line-height:13.52px;color:#000;letter-spacing:-0.05px;white-space:pre;right:1313.55px;text-align:right;">102</div>
<div style="top:184.49px;font-size:10.4px;line-height:13.52px;color:#000;letter-spacing:-0.2px;white-space:pre;right:1226.50px;text-align:right;">1</div>
<div style="top:184.49px;font-size:10.4px;line-height:13.52px;color:#000;letter-spacing:-0.15px;white-space:pre;left:177.50px;">ZAKAZ...</div>
<div style="top:184.49px;font-size:10.4px;line-height:13.52px;color:#000;letter-spacing:-0.1px;white-space:pre;left:224.20px;">Zaka...</div>
<div style="top:184.49px;font-size:10.4px;line-height:13.52px;color:#000;letter-spacing:-0.1px;white-space:pre;left:264.60px;">Mor....</div>
<div style="top:184.49px;font-size:10.4px;line-height:13.52px;color:#000;letter-spacing:0.1px;white-space:pre;left:313.00px;">...</div>
<div style="top:184.49px;font-size:10.4px;line-height:13.52px;color:#000;letter-spacing:-0.1px;white-space:pre;right:868.60px;text-align:right;">0,0000</div>
<div style="top:184.49px;font-size:10.4px;line-height:13.52px;color:#000;letter-spacing:-0.1px;white-space:pre;right:751.80px;text-align:right;">0,0000</div>
<div style="top:184.49px;font-size:10.4px;line-height:13.52px;color:#000;letter-spacing:-0.2px;white-space:pre;left:777.00px;">N</div>
<div style="top:184.49px;font-size:10.4px;line-height:13.52px;color:#000;letter-spacing:-0.216px;white-space:pre;left:879.30px;">vytištěno</div>
<div style="top:184.49px;font-size:10.4px;line-height:13.52px;color:#000;letter-spacing:-0.26px;white-space:pre;left:964.60px;width:141.00px;overflow:hidden;">ZAKAZNIK112  xxxx 3.řádek ...</div>
<div style="top:184.49px;font-size:10.4px;line-height:13.52px;color:#000;letter-spacing:-0.26px;white-space:pre;left:1109.60px;">ZAKAZNIK112  xxxx 3.řádek z SDK-...</div>
<div style="top:198.89px;font-size:10.4px;line-height:13.52px;color:#000;letter-spacing:-0.05px;white-space:pre;right:1313.55px;text-align:right;">103</div>
<div style="top:198.89px;font-size:10.4px;line-height:13.52px;color:#000;letter-spacing:-0.2px;white-space:pre;right:1226.50px;text-align:right;">1</div>
<div style="top:198.89px;font-size:10.4px;line-height:13.52px;color:#000;letter-spacing:-0.15px;white-space:pre;left:177.50px;">ZAKAZ...</div>
<div style="top:198.89px;font-size:10.4px;line-height:13.52px;color:#000;letter-spacing:-0.1px;white-space:pre;left:224.20px;">Zaka...</div>
<div style="top:198.89px;font-size:10.4px;line-height:13.52px;color:#000;letter-spacing:0.1px;white-space:pre;left:313.00px;">...</div>
<div style="top:198.89px;font-size:10.4px;line-height:13.52px;color:#000;letter-spacing:-0.1px;white-space:pre;right:868.60px;text-align:right;">0,0000</div>
<div style="top:198.89px;font-size:10.4px;line-height:13.52px;color:#000;letter-spacing:-0.1px;white-space:pre;right:751.80px;text-align:right;">0,0000</div>
<div style="top:198.89px;font-size:10.4px;line-height:13.52px;color:#000;letter-spacing:-0.2px;white-space:pre;left:777.00px;">N</div>
<div style="top:198.89px;font-size:10.4px;line-height:13.52px;color:#000;letter-spacing:-0.216px;white-space:pre;left:879.30px;">vytištěno</div>
<div style="top:198.89px;font-size:10.4px;line-height:13.52px;color:#000;letter-spacing:-0.26px;white-space:pre;left:964.60px;width:141.00px;overflow:hidden;">ZAKAZNIK112  xxxx 3.řádek ...</div>
<div style="top:198.89px;font-size:10.4px;line-height:13.52px;color:#000;letter-spacing:-0.26px;white-space:pre;left:1109.60px;">ZAKAZNIK112  xxxx 3.řádek z SDK-...</div>
<div style="top:213.29px;font-size:10.4px;line-height:13.52px;color:#000;letter-spacing:-0.05px;white-space:pre;right:1313.55px;text-align:right;">104</div>
<div style="top:213.29px;font-size:10.4px;line-height:13.52px;color:#000;letter-spacing:-0.2px;white-space:pre;right:1226.50px;text-align:right;">1</div>
<div style="top:213.29px;font-size:10.4px;line-height:13.52px;color:#000;letter-spacing:-0.15px;white-space:pre;left:177.50px;">ZAKAZ...</div>
<div style="top:213.29px;font-size:10.4px;line-height:13.52px;color:#000;letter-spacing:-0.1px;white-space:pre;left:224.20px;">Zaka...</div>
<div style="top:213.29px;font-size:10.4px;line-height:13.52px;color:#000;letter-spacing:-0.1px;white-space:pre;left:264.60px;">Mor....</div>
<div style="top:213.29px;font-size:10.4px;line-height:13.52px;color:#000;letter-spacing:0.1px;white-space:pre;left:313.00px;">...</div>
<div style="top:213.29px;font-size:10.4px;line-height:13.52px;color:#000;letter-spacing:-0.1px;white-space:pre;right:868.60px;text-align:right;">0,0000</div>
<div style="top:213.29px;font-size:10.4px;line-height:13.52px;color:#000;letter-spacing:-0.1px;white-space:pre;right:751.80px;text-align:right;">0,0000</div>
<div style="top:213.29px;font-size:10.4px;line-height:13.52px;color:#000;letter-spacing:-0.2px;white-space:pre;left:777.00px;">N</div>
<div style="top:213.29px;font-size:10.4px;line-height:13.52px;color:#000;letter-spacing:-0.216px;white-space:pre;left:879.30px;">vytištěno</div>
<div style="top:213.29px;font-size:10.4px;line-height:13.52px;color:#000;letter-spacing:-0.26px;white-space:pre;left:964.60px;width:141.00px;overflow:hidden;">ZAKAZNIK112  xxxx 3.řádek ...</div>
<div style="top:213.29px;font-size:10.4px;line-height:13.52px;color:#000;letter-spacing:-0.26px;white-space:pre;left:1109.60px;">ZAKAZNIK112  xxxx 3.řádek z SDK-...</div>
<div style="top:227.69px;font-size:10.4px;line-height:13.52px;color:#000;letter-spacing:-0.05px;white-space:pre;right:1313.55px;text-align:right;">105</div>
<div style="top:227.69px;font-size:10.4px;line-height:13.52px;color:#000;letter-spacing:-0.2px;white-space:pre;right:1226.50px;text-align:right;">1</div>
<div style="top:227.69px;font-size:10.4px;line-height:13.52px;color:#000;letter-spacing:-0.15px;white-space:pre;left:177.50px;">ZAKAZ...</div>
<div style="top:227.69px;font-size:10.4px;line-height:13.52px;color:#000;letter-spacing:-0.1px;white-space:pre;left:224.20px;">Zaka...</div>
<div style="top:227.69px;font-size:10.4px;line-height:13.52px;color:#000;letter-spacing:-0.1px;white-space:pre;left:264.60px;">Mor....</div>
<div style="top:227.69px;font-size:10.4px;line-height:13.52px;color:#000;letter-spacing:0.1px;white-space:pre;left:313.00px;">...</div>
<div style="top:227.69px;font-size:10.4px;line-height:13.52px;color:#000;letter-spacing:-0.1px;white-space:pre;right:868.60px;text-align:right;">0,0000</div>
<div style="top:227.69px;font-size:10.4px;line-height:13.52px;color:#000;letter-spacing:-0.1px;white-space:pre;right:751.80px;text-align:right;">0,0000</div>
<div style="top:227.69px;font-size:10.4px;line-height:13.52px;color:#000;letter-spacing:-0.2px;white-space:pre;left:777.00px;">N</div>
<div style="top:227.69px;font-size:10.4px;line-height:13.52px;color:#000;letter-spacing:-0.216px;white-space:pre;left:879.30px;">vytištěno</div>
<div style="top:227.69px;font-size:10.4px;line-height:13.52px;color:#000;letter-spacing:-0.26px;white-space:pre;left:964.60px;width:141.00px;overflow:hidden;">ZAKAZNIK112  xxxx 3.řádek ...</div>
<div style="top:227.69px;font-size:10.4px;line-height:13.52px;color:#000;letter-spacing:-0.26px;white-space:pre;left:1109.60px;">ZAKAZNIK112  xxxx 3.řádek z SDK-...</div>
<div style="top:242.09px;font-size:10.4px;line-height:13.52px;color:#000;letter-spacing:-0.05px;white-space:pre;right:1313.55px;text-align:right;">106</div>
<div style="top:242.09px;font-size:10.4px;line-height:13.52px;color:#000;letter-spacing:-0.2px;white-space:pre;right:1226.50px;text-align:right;">1</div>
<div style="top:242.09px;font-size:10.4px;line-height:13.52px;color:#000;letter-spacing:-0.15px;white-space:pre;left:177.50px;">ZAKAZ...</div>
<div style="top:242.09px;font-size:10.4px;line-height:13.52px;color:#000;letter-spacing:-0.1px;white-space:pre;left:224.20px;">Zaka...</div>
<div style="top:242.09px;font-size:10.4px;line-height:13.52px;color:#000;letter-spacing:-0.1px;white-space:pre;left:264.60px;">Mor....</div>
<div style="top:242.09px;font-size:10.4px;line-height:13.52px;color:#000;letter-spacing:0.1px;white-space:pre;left:313.00px;">...</div>
<div style="top:242.09px;font-size:10.4px;line-height:13.52px;color:#000;letter-spacing:-0.1px;white-space:pre;right:868.60px;text-align:right;">0,0000</div>
<div style="top:242.09px;font-size:10.4px;line-height:13.52px;color:#000;letter-spacing:-0.1px;white-space:pre;right:751.80px;text-align:right;">0,0000</div>
<div style="top:242.09px;font-size:10.4px;line-height:13.52px;color:#000;letter-spacing:-0.2px;white-space:pre;left:777.00px;">N</div>
<div style="top:242.09px;font-size:10.4px;line-height:13.52px;color:#000;letter-spacing:-0.216px;white-space:pre;left:879.30px;">vytištěno</div>
<div style="top:242.09px;font-size:10.4px;line-height:13.52px;color:#000;letter-spacing:-0.26px;white-space:pre;left:964.60px;width:141.00px;overflow:hidden;">ZAKAZNIK112  xxxx 3.řádek ...</div>
<div style="top:242.09px;font-size:10.4px;line-height:13.52px;color:#000;letter-spacing:-0.26px;white-space:pre;left:1109.60px;">ZAKAZNIK112  xxxx 3.řádek z SDK-...</div>
<div style="top:256.49px;font-size:10.4px;line-height:13.52px;color:#000;letter-spacing:-0.05px;white-space:pre;right:1313.55px;text-align:right;">107</div>
<div style="top:256.49px;font-size:10.4px;line-height:13.52px;color:#000;letter-spacing:-0.2px;white-space:pre;right:1226.50px;text-align:right;">1</div>
<div style="top:256.49px;font-size:10.4px;line-height:13.52px;color:#000;letter-spacing:-0.15px;white-space:pre;left:177.50px;">ZAKAZ...</div>
<div style="top:256.49px;font-size:10.4px;line-height:13.52px;color:#000;letter-spacing:-0.1px;white-space:pre;left:224.20px;">Zaka...</div>
<div style="top:256.49px;font-size:10.4px;line-height:13.52px;color:#000;letter-spacing:-0.1px;white-space:pre;left:264.60px;">Mor....</div>
<div style="top:256.49px;font-size:10.4px;line-height:13.52px;color:#000;letter-spacing:0.1px;white-space:pre;left:313.00px;">...</div>
<div style="top:256.49px;font-size:10.4px;line-height:13.52px;color:#000;letter-spacing:-0.1px;white-space:pre;right:868.60px;text-align:right;">0,0000</div>
<div style="top:256.49px;font-size:10.4px;line-height:13.52px;color:#000;letter-spacing:-0.1px;white-space:pre;right:751.80px;text-align:right;">0,0000</div>
<div style="top:256.49px;font-size:10.4px;line-height:13.52px;color:#000;letter-spacing:-0.2px;white-space:pre;left:777.00px;">N</div>
<div style="top:256.49px;font-size:10.4px;line-height:13.52px;color:#000;letter-spacing:-0.216px;white-space:pre;left:879.30px;">vytištěno</div>
<div style="top:256.49px;font-size:10.4px;line-height:13.52px;color:#000;letter-spacing:-0.26px;white-space:pre;left:964.60px;width:141.00px;overflow:hidden;">ZAKAZNIK112  xxxx 3.řádek ...</div>
<div style="top:256.49px;font-size:10.4px;line-height:13.52px;color:#000;letter-spacing:-0.26px;white-space:pre;left:1109.60px;">ZAKAZNIK112  xxxx 3.řádek z SDK-...</div>
<div style="top:270.89px;font-size:10.4px;line-height:13.52px;color:#000;letter-spacing:-0.05px;white-space:pre;right:1313.55px;text-align:right;">108</div>
<div style="top:270.89px;font-size:10.4px;line-height:13.52px;color:#000;letter-spacing:-0.2px;white-space:pre;right:1226.50px;text-align:right;">1</div>
<div style="top:270.89px;font-size:10.4px;line-height:13.52px;color:#000;letter-spacing:-0.15px;white-space:pre;left:177.50px;">ZAKAZ...</div>
<div style="top:270.89px;font-size:10.4px;line-height:13.52px;color:#000;letter-spacing:-0.1px;white-space:pre;left:224.20px;">Zaka...</div>
<div style="top:270.89px;font-size:10.4px;line-height:13.52px;color:#000;letter-spacing:-0.1px;white-space:pre;left:264.60px;">Mor....</div>
<div style="top:270.89px;font-size:10.4px;line-height:13.52px;color:#000;letter-spacing:0.1px;white-space:pre;left:313.00px;">...</div>
<div style="top:270.89px;font-size:10.4px;line-height:13.52px;color:#000;letter-spacing:-0.1px;white-space:pre;right:868.60px;text-align:right;">0,0000</div>
<div style="top:270.89px;font-size:10.4px;line-height:13.52px;color:#000;letter-spacing:-0.1px;white-space:pre;right:751.80px;text-align:right;">0,0000</div>
<div style="top:270.89px;font-size:10.4px;line-height:13.52px;color:#000;letter-spacing:-0.2px;white-space:pre;left:777.00px;">N</div>
<div style="top:270.89px;font-size:10.4px;line-height:13.52px;color:#000;letter-spacing:-0.216px;white-space:pre;left:879.30px;">vytištěno</div>
<div style="top:270.89px;font-size:10.4px;line-height:13.52px;color:#000;letter-spacing:-0.26px;white-space:pre;left:964.60px;width:141.00px;overflow:hidden;">ZAKAZNIK112  xxxx 3.řádek ...</div>
<div style="top:270.89px;font-size:10.4px;line-height:13.52px;color:#000;letter-spacing:-0.26px;white-space:pre;left:1109.60px;">ZAKAZNIK112  xxxx 3.řádek z SDK-...</div>
<div style="top:285.29px;font-size:10.4px;line-height:13.52px;color:#000;letter-spacing:-0.05px;white-space:pre;right:1313.55px;text-align:right;">109</div>
<div style="top:285.29px;font-size:10.4px;line-height:13.52px;color:#000;letter-spacing:-0.2px;white-space:pre;right:1226.50px;text-align:right;">1</div>
<div style="top:285.29px;font-size:10.4px;line-height:13.52px;color:#000;letter-spacing:-0.15px;white-space:pre;left:177.50px;">ZAKAZ...</div>
<div style="top:285.29px;font-size:10.4px;line-height:13.52px;color:#000;letter-spacing:-0.1px;white-space:pre;left:224.20px;">Zaka...</div>
<div style="top:285.29px;font-size:10.4px;line-height:13.52px;color:#000;letter-spacing:-0.1px;white-space:pre;left:264.60px;">Mor....</div>
<div style="top:285.29px;font-size:10.4px;line-height:13.52px;color:#000;letter-spacing:0.1px;white-space:pre;left:313.00px;">...</div>
<div style="top:285.29px;font-size:10.4px;line-height:13.52px;color:#000;letter-spacing:-0.1px;white-space:pre;right:868.60px;text-align:right;">0,0000</div>
<div style="top:285.29px;font-size:10.4px;line-height:13.52px;color:#000;letter-spacing:-0.1px;white-space:pre;right:751.80px;text-align:right;">0,0000</div>
<div style="top:285.29px;font-size:10.4px;line-height:13.52px;color:#000;letter-spacing:-0.2px;white-space:pre;left:777.00px;">N</div>
<div style="top:285.29px;font-size:10.4px;line-height:13.52px;color:#000;letter-spacing:-0.216px;white-space:pre;left:879.30px;">vytištěno</div>
<div style="top:285.29px;font-size:10.4px;line-height:13.52px;color:#000;letter-spacing:-0.26px;white-space:pre;left:964.60px;width:141.00px;overflow:hidden;">ZAKAZNIK112  xxxx 3.řádek ...</div>
<div style="top:285.29px;font-size:10.4px;line-height:13.52px;color:#000;letter-spacing:-0.26px;white-space:pre;left:1109.60px;">ZAKAZNIK112  xxxx 3.řádek z SDK-...</div>
<div style="top:299.69px;font-size:10.4px;line-height:13.52px;color:#000;letter-spacing:-0.05px;white-space:pre;right:1313.55px;text-align:right;">110</div>
<div style="top:299.69px;font-size:10.4px;line-height:13.52px;color:#000;letter-spacing:-0.2px;white-space:pre;right:1226.50px;text-align:right;">1</div>
<div style="top:299.69px;font-size:10.4px;line-height:13.52px;color:#000;letter-spacing:-0.15px;white-space:pre;left:177.50px;">ZAKAZ...</div>
<div style="top:299.69px;font-size:10.4px;line-height:13.52px;color:#000;letter-spacing:-0.1px;white-space:pre;left:224.20px;">Zaka...</div>
<div style="top:299.69px;font-size:10.4px;line-height:13.52px;color:#000;letter-spacing:-0.1px;white-space:pre;left:264.60px;">Mor....</div>
<div style="top:299.69px;font-size:10.4px;line-height:13.52px;color:#000;letter-spacing:0.1px;white-space:pre;left:313.00px;">...</div>
<div style="top:299.69px;font-size:10.4px;line-height:13.52px;color:#000;letter-spacing:-0.1px;white-space:pre;right:868.60px;text-align:right;">0,0000</div>
<div style="top:299.69px;font-size:10.4px;line-height:13.52px;color:#000;letter-spacing:-0.1px;white-space:pre;right:751.80px;text-align:right;">0,0000</div>
<div style="top:299.69px;font-size:10.4px;line-height:13.52px;color:#000;letter-spacing:-0.2px;white-space:pre;left:777.00px;">N</div>
<div style="top:299.69px;font-size:10.4px;line-height:13.52px;color:#000;letter-spacing:-0.216px;white-space:pre;left:879.30px;">vytištěno</div>
<div style="top:299.69px;font-size:10.4px;line-height:13.52px;color:#000;letter-spacing:-0.26px;white-space:pre;left:964.60px;width:141.00px;overflow:hidden;">ZAKAZNIK112  xxxx 3.řádek ...</div>
<div style="top:299.69px;font-size:10.4px;line-height:13.52px;color:#000;letter-spacing:-0.26px;white-space:pre;left:1109.60px;">ZAKAZNIK112  xxxx 3.řádek z SDK-...</div>
<div style="top:314.09px;font-size:10.4px;line-height:13.52px;color:#000;letter-spacing:-0.05px;white-space:pre;right:1313.55px;text-align:right;">111</div>
<div style="top:314.09px;font-size:10.4px;line-height:13.52px;color:#000;letter-spacing:-0.2px;white-space:pre;right:1226.50px;text-align:right;">1</div>
<div style="top:314.09px;font-size:10.4px;line-height:13.52px;color:#000;letter-spacing:-0.15px;white-space:pre;left:177.50px;">ZAKAZ...</div>
<div style="top:314.09px;font-size:10.4px;line-height:13.52px;color:#000;letter-spacing:-0.1px;white-space:pre;left:224.20px;">Zaka...</div>
<div style="top:314.09px;font-size:10.4px;line-height:13.52px;color:#000;letter-spacing:-0.1px;white-space:pre;left:264.60px;">Mor....</div>
<div style="top:314.09px;font-size:10.4px;line-height:13.52px;color:#000;letter-spacing:0.1px;white-space:pre;left:313.00px;">...</div>
<div style="top:314.09px;font-size:10.4px;line-height:13.52px;color:#000;letter-spacing:-0.1px;white-space:pre;right:868.60px;text-align:right;">0,0000</div>
<div style="top:314.09px;font-size:10.4px;line-height:13.52px;color:#000;letter-spacing:-0.1px;white-space:pre;right:751.80px;text-align:right;">0,0000</div>
<div style="top:314.09px;font-size:10.4px;line-height:13.52px;color:#000;letter-spacing:-0.2px;white-space:pre;left:777.00px;">N</div>
<div style="top:314.09px;font-size:10.4px;line-height:13.52px;color:#000;letter-spacing:-0.216px;white-space:pre;left:879.30px;">vytištěno</div>
<div style="top:314.09px;font-size:10.4px;line-height:13.52px;color:#000;letter-spacing:-0.26px;white-space:pre;left:964.60px;width:141.00px;overflow:hidden;">ZAKAZNIK112  xxxx 3.řádek ...</div>
<div style="top:314.09px;font-size:10.4px;line-height:13.52px;color:#000;letter-spacing:-0.26px;white-space:pre;left:1109.60px;">ZAKAZNIK112  xxxx 3.řádek z SDK-...</div>
<div style="top:328.49px;font-size:10.4px;line-height:13.52px;color:#000;letter-spacing:-0.05px;white-space:pre;right:1313.55px;text-align:right;">113</div>
<div style="top:328.49px;font-size:10.4px;line-height:13.52px;color:#000;letter-spacing:-0.2px;white-space:pre;right:1226.50px;text-align:right;">1</div>
<div style="top:328.49px;font-size:10.4px;line-height:13.52px;color:#000;letter-spacing:-0.15px;white-space:pre;left:177.50px;">ZAKAZ...</div>
<div style="top:328.49px;font-size:10.4px;line-height:13.52px;color:#000;letter-spacing:-0.1px;white-space:pre;left:224.20px;">Zaka...</div>
<div style="top:328.49px;font-size:10.4px;line-height:13.52px;color:#000;letter-spacing:-0.1px;white-space:pre;left:264.60px;">Mor....</div>
<div style="top:328.49px;font-size:10.4px;line-height:13.52px;color:#000;letter-spacing:0.1px;white-space:pre;left:313.00px;">...</div>
<div style="top:328.49px;font-size:10.4px;line-height:13.52px;color:#000;letter-spacing:-0.1px;white-space:pre;right:868.60px;text-align:right;">0,0000</div>
<div style="top:328.49px;font-size:10.4px;line-height:13.52px;color:#000;letter-spacing:-0.1px;white-space:pre;right:751.80px;text-align:right;">0,0000</div>
<div style="top:328.49px;font-size:10.4px;line-height:13.52px;color:#000;letter-spacing:-0.2px;white-space:pre;left:777.00px;">N</div>
<div style="top:328.49px;font-size:10.4px;line-height:13.52px;color:#000;letter-spacing:-0.216px;white-space:pre;left:879.30px;">vytištěno</div>
<div style="top:328.49px;font-size:10.4px;line-height:13.52px;color:#000;letter-spacing:-0.26px;white-space:pre;left:964.60px;width:141.00px;overflow:hidden;">ZAKAZNIK112  xxxx 3.řádek ...</div>
<div style="top:328.49px;font-size:10.4px;line-height:13.52px;color:#000;letter-spacing:-0.26px;white-space:pre;left:1109.60px;">ZAKAZNIK112  xxxx 3.řádek z SDK-...</div>
<div style="top:342.89px;font-size:10.4px;line-height:13.52px;color:#000;letter-spacing:-0.05px;white-space:pre;right:1313.55px;text-align:right;">114</div>
<div style="top:342.89px;font-size:10.4px;line-height:13.52px;color:#000;letter-spacing:-0.2px;white-space:pre;right:1226.50px;text-align:right;">1</div>
<div style="top:342.89px;font-size:10.4px;line-height:13.52px;color:#000;letter-spacing:-0.15px;white-space:pre;left:177.50px;">ZAKAZ...</div>
<div style="top:342.89px;font-size:10.4px;line-height:13.52px;color:#000;letter-spacing:-0.1px;white-space:pre;left:224.20px;">Zaka...</div>
<div style="top:342.89px;font-size:10.4px;line-height:13.52px;color:#000;letter-spacing:-0.1px;white-space:pre;left:264.60px;">Mor....</div>
<div style="top:342.89px;font-size:10.4px;line-height:13.52px;color:#000;letter-spacing:0.1px;white-space:pre;left:313.00px;">...</div>
<div style="top:342.89px;font-size:10.4px;line-height:13.52px;color:#000;letter-spacing:-0.1px;white-space:pre;right:868.60px;text-align:right;">0,0000</div>
<div style="top:342.89px;font-size:10.4px;line-height:13.52px;color:#000;letter-spacing:-0.1px;white-space:pre;right:751.80px;text-align:right;">0,0000</div>
<div style="top:342.89px;font-size:10.4px;line-height:13.52px;color:#000;letter-spacing:-0.2px;white-space:pre;left:777.00px;">N</div>
<div style="top:342.89px;font-size:10.4px;line-height:13.52px;color:#000;letter-spacing:-0.216px;white-space:pre;left:879.30px;">vytištěno</div>
<div style="top:342.89px;font-size:10.4px;line-height:13.52px;color:#000;letter-spacing:-0.26px;white-space:pre;left:964.60px;width:141.00px;overflow:hidden;">ZAKAZNIK112  xxxx 3.řádek ...</div>
<div style="top:342.89px;font-size:10.4px;line-height:13.52px;color:#000;letter-spacing:-0.26px;white-space:pre;left:1109.60px;">ZAKAZNIK112  xxxx 3.řádek z SDK-...</div>
<div style="top:357.29px;font-size:10.4px;line-height:13.52px;color:#000;letter-spacing:-0.05px;white-space:pre;right:1313.55px;text-align:right;">115</div>
<div style="top:357.29px;font-size:10.4px;line-height:13.52px;color:#000;letter-spacing:-0.2px;white-space:pre;left:90.60px;">A</div>
<div style="top:357.29px;font-size:10.4px;line-height:13.52px;color:#000;letter-spacing:-0.2px;white-space:pre;right:1226.50px;text-align:right;">1</div>
<div style="top:357.29px;font-size:10.4px;line-height:13.52px;color:#000;letter-spacing:-0.15px;white-space:pre;left:177.50px;">ZAKAZ...</div>
<div style="top:357.29px;font-size:10.4px;line-height:13.52px;color:#000;letter-spacing:-0.1px;white-space:pre;left:224.20px;">Zaka...</div>
<div style="top:357.29px;font-size:10.4px;line-height:13.52px;color:#000;letter-spacing:-0.1px;white-space:pre;left:264.60px;">MOR...</div>
<div style="top:357.29px;font-size:10.4px;line-height:13.52px;color:#000;letter-spacing:0.1px;white-space:pre;left:313.00px;">...</div>
<div style="top:357.29px;font-size:10.4px;line-height:13.52px;color:#000;letter-spacing:-0.1px;white-space:pre;right:868.60px;text-align:right;">0,0000</div>
<div style="top:357.29px;font-size:10.4px;line-height:13.52px;color:#000;letter-spacing:-0.1px;white-space:pre;right:751.80px;text-align:right;">0,0000</div>
<div style="top:357.29px;font-size:10.4px;line-height:13.52px;color:#000;letter-spacing:-0.2px;white-space:pre;left:777.00px;">N</div>
<div style="top:357.29px;font-size:10.4px;line-height:13.52px;color:#000;letter-spacing:-0.216px;white-space:pre;left:879.30px;">vytištěno</div>
<div style="top:357.29px;font-size:10.4px;line-height:13.52px;color:#000;letter-spacing:-0.26px;white-space:pre;left:964.60px;width:141.00px;overflow:hidden;">ZAKAZNIK112  xxxx 3.řádek ...</div>
<div style="top:357.29px;font-size:10.4px;line-height:13.52px;color:#000;letter-spacing:-0.26px;white-space:pre;left:1109.60px;">ZAKAZNIK112  xxxx 3.řádek z SDK-...</div>
<div style="top:371.69px;font-size:10.4px;line-height:13.52px;color:#fff;letter-spacing:-0.05px;white-space:pre;right:1313.55px;text-align:right;">116</div>
<div style="top:371.69px;font-size:10.4px;line-height:13.52px;color:#fff;letter-spacing:-0.2px;white-space:pre;left:90.60px;">A</div>
<div style="top:371.69px;font-size:10.4px;line-height:13.52px;color:#fff;letter-spacing:-0.2px;white-space:pre;right:1226.50px;text-align:right;">1</div>
<div style="top:371.69px;font-size:10.4px;line-height:13.52px;color:#fff;letter-spacing:-0.15px;white-space:pre;left:177.50px;">ZAKAZ...</div>
<div style="top:371.69px;font-size:10.4px;line-height:13.52px;color:#fff;letter-spacing:-0.1px;white-space:pre;left:224.20px;">Zaka...</div>
<div style="top:371.69px;font-size:10.4px;line-height:13.52px;color:#fff;letter-spacing:-0.1px;white-space:pre;left:264.60px;">MOR...</div>
<div style="top:371.69px;font-size:10.4px;line-height:13.52px;color:#fff;letter-spacing:0.1px;white-space:pre;left:313.00px;">...</div>
<div style="top:371.69px;font-size:10.4px;line-height:13.52px;color:#fff;letter-spacing:-0.1px;white-space:pre;right:868.60px;text-align:right;">0,0000</div>
<div style="top:371.69px;font-size:10.4px;line-height:13.52px;color:#fff;letter-spacing:-0.1px;white-space:pre;right:751.80px;text-align:right;">0,0000</div>
<div style="top:371.69px;font-size:10.4px;line-height:13.52px;color:#fff;letter-spacing:-0.2px;white-space:pre;left:777.00px;">N</div>
<div style="top:371.69px;font-size:10.4px;line-height:13.52px;color:#fff;letter-spacing:-0.216px;white-space:pre;left:879.30px;">vytištěno</div>
<div style="top:371.69px;font-size:10.4px;line-height:13.52px;color:#fff;letter-spacing:-0.26px;white-space:pre;left:964.60px;width:141.00px;overflow:hidden;">ZAKAZNIK112  xxxx 3.řádek ...</div>
<div style="top:371.69px;font-size:10.4px;line-height:13.52px;color:#fff;letter-spacing:-0.26px;white-space:pre;left:1109.60px;">ZAKAZNIK112  xxxx 3.řádek z SDK-...</div>
<svg style="left:0;top:0" width="1398" height="661" viewBox="0 0 1398 661"><rect x="14.30" y="392.90" width="1384.00" height="1.10" fill="#8e8e8e"/><rect x="14.00" y="394.00" width="1384.00" height="3.10" fill="#f7f7f7"/><rect x="14.30" y="397.10" width="1384.00" height="1.50" fill="#7a7a7a"/><rect x="13.70" y="397.10" width="1.40" height="264.00" fill="#767a80"/></svg>
<svg style="left:0;top:0" width="1398" height="661" viewBox="0 0 1398 661"><rect x="17.70" y="404.50" width="345.60" height="86.20" rx="3.2" fill="none" stroke="#b0cae8" stroke-width="1.0"/><rect x="367.90" y="404.50" width="695.60" height="86.20" rx="3.2" fill="none" stroke="#b0cae8" stroke-width="1.0"/></svg>
<div style="top:412.84px;font-size:10.4px;line-height:13.52px;color:#000;letter-spacing:-0.135px;white-space:pre;left:25.80px;">Typ dokladu</div>
<div style="top:432.74px;font-size:10.4px;line-height:13.52px;color:#000;letter-spacing:-0.121px;white-space:pre;left:25.80px;">Středisko uživatele</div>
<div style="top:452.54px;font-size:10.4px;line-height:13.52px;color:#000;letter-spacing:-0.098px;white-space:pre;left:25.80px;">Středisko realizace</div>
<div style="top:473.04px;font-size:10.4px;line-height:13.52px;color:#000;letter-spacing:0.3px;white-space:pre;font-weight:bold;left:25.80px;">Číslo dokladu</div>
<svg style="left:0;top:0" width="1398" height="661" viewBox="0 0 1398 661"><rect x="130.95" y="409.85" width="50.10" height="17.50" fill="#e6e6e6" stroke="#b6b6b6" stroke-width="0.9"/><rect x="169.75" y="409.85" width="11.30" height="17.50" fill="#9d9d9d" stroke="#8c8c8c" stroke-width="0.9"/></svg>
<svg style="left:172.50px;top:413.60px" width="5.80" height="9.00" viewBox="0 0 5.8 9"><path d="M2.3,0h1.2v3.4h1.7l-2.3,2.8l-2.3,-2.8h1.7z" fill="#b9b9b9"/><rect x="0.4" y="7.4" width="5" height="0.9" fill="#b4b4b4"/></svg>
<div style="top:412.74px;font-size:10.4px;line-height:13.52px;color:#000;letter-spacing:-0.2px;white-space:pre;left:132.90px;">A</div>
<div style="top:411.04px;font-size:10.4px;line-height:13.52px;color:#9c1f9c;letter-spacing:0.0px;white-space:pre;left:195.20px;">Test</div>
<svg style="left:0;top:0" width="1398" height="661" viewBox="0 0 1398 661"><rect x="130.95" y="429.75" width="99.40" height="17.50" fill="#e6e6e6" stroke="#b6b6b6" stroke-width="0.9"/><rect x="130.95" y="449.75" width="99.40" height="17.40" fill="#e6e6e6" stroke="#b6b6b6" stroke-width="0.9"/><rect x="219.05" y="449.75" width="11.30" height="17.40" fill="#9d9d9d" stroke="#8c8c8c" stroke-width="0.9"/></svg>
<svg style="left:221.80px;top:453.50px" width="5.80" height="9.00" viewBox="0 0 5.8 9"><path d="M2.3,0h1.2v3.4h1.7l-2.3,2.8l-2.3,-2.8h1.7z" fill="#b9b9b9"/><rect x="0.4" y="7.4" width="5" height="0.9" fill="#b4b4b4"/></svg>
<svg style="left:0;top:0" width="1398" height="661" viewBox="0 0 1398 661"><rect x="130.95" y="469.85" width="85.20" height="17.70" fill="#e6e6e6" stroke="#b6b6b6" stroke-width="0.9"/></svg>
<div style="top:471.74px;font-size:11.4px;line-height:14.82px;color:#000;letter-spacing:0.5px;white-space:pre;font-weight:bold;right:1184.30px;text-align:right;">116</div>
<svg style="left:217.40px;top:470.50px" width="12.30" height="17.10" viewBox="0 0 12.3 17.1"><rect x="0" y="0" width="12.3" height="17.1" rx="1.2" fill="#a6a6a6"/><path d="M2.6,17v-9.6a3.6,3.6 0 0 1 7.2,0v9.6z" fill="#bcbcbc"/><rect x="5.7" y="9" width="1" height="5" fill="#a0a0a0"/></svg>
<div style="top:412.84px;font-size:10.4px;line-height:13.52px;color:#000;letter-spacing:-0.119px;white-space:pre;left:376.00px;">Odběratel</div>
<div style="top:431.94px;font-size:10.4px;line-height:13.52px;color:#800080;letter-spacing:0.62px;white-space:pre;font-weight:bold;left:376.00px;">Zakaznik - Morava</div>
<svg style="left:0;top:0" width="1398" height="661" viewBox="0 0 1398 661"><rect x="516.45" y="409.85" width="99.90" height="18.10" fill="#e6e6e6" stroke="#b6b6b6" stroke-width="0.9"/></svg>
<div style="top:412.74px;font-size:10.4px;line-height:13.52px;color:#000;letter-spacing:-0.2px;white-space:pre;right:784.80px;text-align:right;">1</div>
<div style="top:412.84px;font-size:10.4px;line-height:13.52px;color:#000;letter-spacing:-0.3px;white-space:pre;left:656.30px;">Hodnota</div>
<div style="top:432.64px;font-size:10.4px;line-height:13.52px;color:#000;letter-spacing:-0.3px;white-space:pre;left:656.30px;">Hodnota</div>
<div style="top:432.64px;font-size:10.4px;line-height:13.52px;color:#000;letter-spacing:-0.2px;white-space:pre;left:716.30px;">CZK</div>
<svg style="left:0;top:0" width="1398" height="661" viewBox="0 0 1398 661"><rect x="756.45" y="409.85" width="89.90" height="17.50" fill="#e6e6e6" stroke="#b6b6b6" stroke-width="0.9"/></svg>
<div style="top:412.74px;font-size:10.4px;line-height:13.52px;color:#000;letter-spacing:-0.2px;white-space:pre;right:554.80px;text-align:right;">0,00</div>
<svg style="left:0;top:0" width="1398" height="661" viewBox="0 0 1398 661"><rect x="756.45" y="429.85" width="89.90" height="17.90" fill="#e6e6e6" stroke="#b6b6b6" stroke-width="0.9"/></svg>
<div style="top:432.74px;font-size:10.4px;line-height:13.52px;color:#000;letter-spacing:-0.2px;white-space:pre;right:554.80px;text-align:right;">20,00</div>
<div style="top:412.84px;font-size:10.4px;line-height:13.52px;color:#000;letter-spacing:-0.19px;white-space:pre;left:876.30px;">Datum založení</div>
<div style="top:432.64px;font-size:10.4px;line-height:13.52px;color:#000;letter-spacing:-0.228px;white-space:pre;left:876.30px;">Plánované splnění</div>
<div style="top:452.94px;font-size:10.4px;line-height:13.52px;color:#000;letter-spacing:-0.187px;white-space:pre;left:876.30px;">Skutečné splnění</div>
<svg style="left:0;top:0" width="1398" height="661" viewBox="0 0 1398 661"><rect x="966.05" y="409.85" width="90.50" height="17.50" fill="#e6e6e6" stroke="#b6b6b6" stroke-width="0.9"/><rect x="1045.25" y="409.85" width="11.30" height="17.50" fill="#9d9d9d" stroke="#8c8c8c" stroke-width="0.9"/></svg>
<svg style="left:1047.40px;top:412.60px" width="7.00" height="11.60" viewBox="0 0 7 11.6"><rect x="0.3" y="0.3" width="6.4" height="11" fill="none" stroke="#b4b4b4" stroke-width="0.6"/><rect x="1" y="1.6" width="2.6" height="1.7" fill="#7c7c7c"/><path d="M0.3,3.6h6.4M0.3,6.2h6.4M0.3,8.8h6.4M2.5,3.6v7.7M4.6,3.6v7.7" stroke="#bcbcbc" stroke-width="0.65"/></svg>
<div style="top:412.74px;font-size:10.4px;line-height:13.52px;color:#000;letter-spacing:-0.145px;white-space:pre;left:968.00px;">31.07.2003</div>
<svg style="left:0;top:0" width="1398" height="661" viewBox="0 0 1398 661"><rect x="966.05" y="429.85" width="90.50" height="17.50" fill="#e6e6e6" stroke="#b6b6b6" stroke-width="0.9"/><rect x="1045.25" y="429.85" width="11.30" height="17.50" fill="#9d9d9d" stroke="#8c8c8c" stroke-width="0.9"/></svg>
<svg style="left:1047.40px;top:432.60px" width="7.00" height="11.60" viewBox="0 0 7 11.6"><rect x="0.3" y="0.3" width="6.4" height="11" fill="none" stroke="#b4b4b4" stroke-width="0.6"/><rect x="1" y="1.6" width="2.6" height="1.7" fill="#7c7c7c"/><path d="M0.3,3.6h6.4M0.3,6.2h6.4M0.3,8.8h6.4M2.5,3.6v7.7M4.6,3.6v7.7" stroke="#bcbcbc" stroke-width="0.65"/></svg>
<div style="top:432.74px;font-size:10.4px;line-height:13.52px;color:#000;letter-spacing:-0.2px;white-space:pre;left:968.00px;">00.00.0000</div>
<svg style="left:0;top:0" width="1398" height="661" viewBox="0 0 1398 661"><rect x="966.05" y="449.75" width="90.50" height="17.60" fill="#e6e6e6" stroke="#b6b6b6" stroke-width="0.9"/><rect x="1045.25" y="449.75" width="11.30" height="17.60" fill="#9d9d9d" stroke="#8c8c8c" stroke-width="0.9"/></svg>
<svg style="left:1047.40px;top:452.50px" width="7.00" height="11.60" viewBox="0 0 7 11.6"><rect x="0.3" y="0.3" width="6.4" height="11" fill="none" stroke="#b4b4b4" stroke-width="0.6"/><rect x="1" y="1.6" width="2.6" height="1.7" fill="#7c7c7c"/><path d="M0.3,3.6h6.4M0.3,6.2h6.4M0.3,8.8h6.4M2.5,3.6v7.7M4.6,3.6v7.7" stroke="#bcbcbc" stroke-width="0.65"/></svg>
<div style="top:452.64px;font-size:10.4px;line-height:13.52px;color:#000;letter-spacing:-0.2px;white-space:pre;left:968.00px;">01.01.1900</div>
<svg style="left:0;top:0" width="1398" height="661" viewBox="0 0 1398 661"><rect x="15.30" y="517.40" width="1384.00" height="2.40" fill="#fcfcfc"/><rect x="15.30" y="517.40" width="1.80" height="144.00" fill="#fcfcfc"/><rect x="15.30" y="500.20" width="99.90" height="19.60" fill="#ffffff"/><rect x="170.10" y="501.30" width="0.90" height="16.10" fill="#d4d4d4"/><rect x="232.20" y="501.30" width="0.90" height="16.10" fill="#d4d4d4"/><rect x="332.00" y="501.30" width="0.90" height="16.10" fill="#d4d4d4"/><rect x="436.30" y="501.30" width="0.90" height="16.10" fill="#d4d4d4"/><rect x="488.20" y="501.30" width="0.90" height="16.10" fill="#d4d4d4"/><rect x="549.10" y="501.30" width="0.90" height="16.10" fill="#d4d4d4"/><rect x="608.30" y="501.30" width="0.90" height="16.10" fill="#d4d4d4"/><rect x="706.10" y="501.30" width="0.90" height="16.10" fill="#d4d4d4"/><rect x="115.20" y="501.30" width="591.30" height="0.80" fill="#dcdcdc"/></svg>
<svg style="left:22.80px;top:503.20px" width="9.60" height="11.60" viewBox="0 0 7.8 11.6"><rect x="0" y="0" width="7" height="11.6" fill="#2eb5e8"/><rect x="0.2" y="0.2" width="3.6" height="1.6" fill="#58c6ee"/><rect x="7" y="0.4" width="0.8" height="11.2" fill="#f4f8fb"/><circle cx="5.6" cy="1.7" r="1.2" fill="#101010"/></svg>
<div style="top:503.84px;font-size:10.4px;line-height:13.52px;color:#000;letter-spacing:0.111px;white-space:pre;font-weight:bold;left:36.60px;">Základní údaje</div>
<svg style="left:119.80px;top:505.60px" width="12.80" height="8.20" viewBox="0 0 12.8 8.2"><rect x="0.4" y="0.4" width="12" height="7.4" rx="1" fill="#fff" stroke="#9a9a9a" stroke-width="0.8"/><rect x="1.6" y="2" width="2" height="1.6" fill="#e03a3a"/><rect x="4.6" y="3.4" width="6.6" height="0.9" fill="#777"/><rect x="4.6" y="5.2" width="6.6" height="0.9" fill="#999"/></svg>
<div style="top:503.84px;font-size:10.4px;line-height:13.52px;color:#000;letter-spacing:-0.245px;white-space:pre;left:136.20px;">Adresy</div>
<svg style="left:176.20px;top:502.60px" width="12.80" height="12.40" viewBox="0 0 12.8 12.4"><path d="M0.5,1.4l1.7,-0.8v11.4" stroke="#d8232a" stroke-width="1.1" fill="none"/><text x="2.6" y="12.2" font-family="Liberation Sans" font-size="12.6" fill="#2f7fd8">2</text><text x="8.6" y="12.2" font-family="Liberation Sans" font-size="8.4" fill="#3aa34a">3</text></svg>
<div style="top:503.84px;font-size:10.4px;line-height:13.52px;color:#000;letter-spacing:-0.3px;white-space:pre;left:192.30px;">Hodnoty</div>
<svg style="left:238.00px;top:504.20px" width="12.20" height="10.00" viewBox="0 0 12.2 10"><rect x="0.2" y="0.4" width="11" height="2.2" rx="0.6" fill="#3a4a6a"/><rect x="1" y="0.9" width="9.4" height="0.9" fill="#e8eef6"/><rect x="2.6" y="3.4" width="9.4" height="3.4" rx="0.6" fill="#f28c28"/><rect x="0.2" y="7.4" width="11" height="2.4" rx="0.6" fill="#2a4a9a"/><rect x="1" y="8" width="9.4" height="0.9" fill="#b9c9ec"/></svg>
<div style="top:503.84px;font-size:10.4px;line-height:13.52px;color:#000;letter-spacing:-0.165px;white-space:pre;left:253.50px;">Doplňkové údaje</div>
<svg style="left:339.60px;top:502.60px" width="9.60" height="12.50" viewBox="0 0 9.6 12.5"><rect x="0.5" y="0.8" width="8.6" height="11.2" rx="1" fill="#e6f1fb" stroke="#6da8de" stroke-width="1"/><rect x="1" y="0.6" width="7.6" height="1.7" fill="#9cc0e4"/><path d="M2.6,9.6l0.6,-2l4.2,-4.6l1.5,1.3l-4.2,4.7z" fill="#f0a030"/><path d="M7.4,3l1.5,1.3l0.5,-0.8l-1.3,-1.2z" fill="#e05a3a"/><path d="M2.6,9.6l0.3,-1l0.7,0.7z" fill="#555"/></svg>
<div style="top:503.84px;font-size:10.4px;line-height:13.52px;color:#000;letter-spacing:-0.138px;white-space:pre;left:353.60px;">Doprovodné texty</div>
<svg style="left:443.40px;top:503.80px" width="9.50" height="10.20" viewBox="0 0 9.5 10.2"><rect x="0" y="0" width="9" height="10.2" fill="#2db6e8"/><path d="M0,2.6h9M0,4h9M4.4,0v10.2" stroke="#e8f6fd" stroke-width="0.7"/><rect x="5" y="4.6" width="3.6" height="1.6" fill="#14303c"/><rect x="5" y="7" width="3.6" height="1.6" fill="#14303c"/><rect x="9" y="0.3" width="0.5" height="10" fill="#fff"/></svg>
<div style="top:503.84px;font-size:10.4px;line-height:13.52px;color:#000;letter-spacing:-0.1px;white-space:pre;left:457.70px;">Řádky</div>
<svg style="left:492.90px;top:504.60px" width="13.60" height="9.20" viewBox="0 0 13.6 9.2"><rect x="0.5" y="0.5" width="3.4" height="3.2" rx="0.5" fill="#fdf3d6" stroke="#e3b23c" stroke-width="0.9"/><rect x="0.5" y="5.3" width="3.4" height="3.2" rx="0.5" fill="#fdf3d6" stroke="#e3b23c" stroke-width="0.9"/><rect x="5.1" y="0.5" width="3.4" height="3.2" rx="0.5" fill="#fdf3d6" stroke="#e3b23c" stroke-width="0.9"/><rect x="5.1" y="5.3" width="3.4" height="3.2" rx="0.5" fill="#fdf3d6" stroke="#e3b23c" stroke-width="0.9"/><rect x="9.7" y="0.5" width="3.4" height="3.2" rx="0.5" fill="#fdf3d6" stroke="#e3b23c" stroke-width="0.9"/><rect x="9.7" y="5.3" width="3.4" height="3.2" rx="0.5" fill="#fdf3d6" stroke="#e3b23c" stroke-width="0.9"/></svg>
<div style="top:503.84px;font-size:10.4px;line-height:13.52px;color:#000;letter-spacing:-0.3px;white-space:pre;left:509.90px;">Rozvrhy</div>
<svg style="left:555.00px;top:502.80px" width="11.60" height="11.80" viewBox="0 0 11.6 11.8"><rect x="0" y="2.2" width="11.6" height="9.6" rx="0.8" fill="#1f7fc4"/><circle cx="5.6" cy="7.2" r="3.7" fill="#fff"/><path d="M5.6,4.6v2.8l2,1.2" stroke="#8a8a8a" stroke-width="0.6" fill="none"/><path d="M6.2,0l1.3,2.2l2.6,0.3l-1.8,1.8l0.6,2.6l-2.4,-1.3l-2.6,1.5l0.8,-2.8l-1.8,-1.8l2.4,-0.3z" fill="#fbc02d"/></svg>
<div style="top:503.84px;font-size:10.4px;line-height:13.52px;color:#000;letter-spacing:-0.182px;white-space:pre;left:570.70px;">Historie</div>
<svg style="left:616.00px;top:503.20px" width="9.60" height="11.60" viewBox="0 0 7.8 11.6"><rect x="0" y="0" width="7" height="11.6" fill="#2eb5e8"/><rect x="0.2" y="0.2" width="3.6" height="1.6" fill="#58c6ee"/><rect x="7" y="0.4" width="0.8" height="11.2" fill="#f4f8fb"/><circle cx="5.6" cy="1.7" r="1.2" fill="#101010"/></svg>
<div style="top:503.84px;font-size:10.4px;line-height:13.52px;color:#000;letter-spacing:-0.124px;white-space:pre;left:629.60px;">Zálohové faktury</div>
<svg style="left:0;top:0" width="1398" height="661" viewBox="0 0 1398 661"><rect x="19.50" y="536.50" width="345.60" height="163.00" rx="3.2" fill="none" stroke="#b0cae8" stroke-width="1.0"/><rect x="23.00" y="533.00" width="59.60" height="7.00" fill="#f0f0f0"/></svg>
<div style="top:530.94px;font-size:11px;line-height:14.3px;color:#000;letter-spacing:0.45px;white-space:pre;font-weight:bold;left:25.40px;">Odběratel</div>
<svg style="left:0;top:0" width="1398" height="661" viewBox="0 0 1398 661"><rect x="370.10" y="536.50" width="274.80" height="81.40" rx="3.2" fill="none" stroke="#b0cae8" stroke-width="1.0"/><rect x="373.60" y="533.00" width="52.60" height="7.00" fill="#f0f0f0"/></svg>
<div style="top:530.94px;font-size:11px;line-height:14.3px;color:#000;letter-spacing:0.068px;white-space:pre;font-weight:bold;left:376.00px;">Logistika</div>
<svg style="left:0;top:0" width="1398" height="661" viewBox="0 0 1398 661"><rect x="649.70" y="536.50" width="415.40" height="81.40" rx="3.2" fill="none" stroke="#b0cae8" stroke-width="1.0"/><rect x="653.60" y="533.00" width="79.20" height="7.00" fill="#f0f0f0"/></svg>
<div style="top:530.94px;font-size:11px;line-height:14.3px;color:#000;letter-spacing:0.315px;white-space:pre;font-weight:bold;left:656.00px;">Časové údaje</div>
<svg style="left:0;top:0" width="1398" height="661" viewBox="0 0 1398 661"><rect x="370.10" y="626.70" width="554.80" height="72.80" rx="3.2" fill="none" stroke="#b0cae8" stroke-width="1.0"/><rect x="373.60" y="623.20" width="109.40" height="7.00" fill="#f0f0f0"/></svg>
<div style="top:621.14px;font-size:11px;line-height:14.3px;color:#000;letter-spacing:0.328px;white-space:pre;font-weight:bold;left:376.00px;">Podmínky dodávky</div>
<svg style="left:0;top:0" width="1398" height="661" viewBox="0 0 1398 661"><rect x="930.30" y="626.70" width="134.80" height="72.80" rx="3.2" fill="none" stroke="#b0cae8" stroke-width="1.0"/><rect x="933.40" y="623.20" width="76.00" height="7.00" fill="#f0f0f0"/></svg>
<div style="top:621.14px;font-size:11px;line-height:14.3px;color:#000;letter-spacing:0.253px;white-space:pre;font-weight:bold;left:935.80px;">Stav dokladu</div>
<div style="top:554.54px;font-size:10.4px;line-height:13.52px;color:#000;letter-spacing:-0.137px;white-space:pre;left:27.50px;">Číslo firmy</div>
<div style="top:574.64px;font-size:10.4px;line-height:13.52px;color:#000;letter-spacing:-0.2px;white-space:pre;left:27.50px;">IČO</div>
<div style="top:594.54px;font-size:10.4px;line-height:13.52px;color:#000;letter-spacing:-0.253px;white-space:pre;left:27.50px;">Jméno/Název</div>
<div style="top:654.74px;font-size:10.4px;line-height:13.52px;color:#000;letter-spacing:-0.2px;white-space:pre;left:27.50px;">Ulice</div>
<svg style="left:0;top:0" width="1398" height="661" viewBox="0 0 1398 661"><rect x="97.45" y="552.05" width="114.90" height="17.50" fill="#e6e6e6" stroke="#b6b6b6" stroke-width="0.9"/><rect x="201.05" y="552.05" width="11.30" height="17.50" fill="#9d9d9d" stroke="#8c8c8c" stroke-width="0.9"/></svg>
<svg style="left:203.80px;top:555.80px" width="5.80" height="9.00" viewBox="0 0 5.8 9"><path d="M2.3,0h1.2v3.4h1.7l-2.3,2.8l-2.3,-2.8h1.7z" fill="#b9b9b9"/><rect x="0.4" y="7.4" width="5" height="0.9" fill="#b4b4b4"/></svg>
<div style="top:554.94px;font-size:10.4px;line-height:13.52px;color:#000;letter-spacing:-0.2px;white-space:pre;right:1201.00px;text-align:right;">1</div>
<svg style="left:0;top:0" width="1398" height="661" viewBox="0 0 1398 661"><rect x="97.45" y="571.85" width="99.90" height="17.50" fill="#e6e6e6" stroke="#b6b6b6" stroke-width="0.9"/></svg>
<div style="top:574.64px;font-size:10.4px;line-height:13.52px;color:#000;letter-spacing:-0.2px;white-space:pre;left:227.20px;">DIČ</div>
<svg style="left:0;top:0" width="1398" height="661" viewBox="0 0 1398 661"><rect x="257.65" y="571.85" width="99.90" height="17.50" fill="#e6e6e6" stroke="#b6b6b6" stroke-width="0.9"/><rect x="97.45" y="591.95" width="260.10" height="17.50" fill="#e6e6e6" stroke="#b6b6b6" stroke-width="0.9"/></svg>
<div style="top:594.84px;font-size:10.4px;line-height:13.52px;color:#000;letter-spacing:-0.2px;white-space:pre;left:99.40px;">Zakaznik - Morava</div>
<svg style="left:0;top:0" width="1398" height="661" viewBox="0 0 1398 661"><rect x="97.45" y="611.85" width="260.10" height="17.50" fill="#e6e6e6" stroke="#b6b6b6" stroke-width="0.9"/><rect x="97.45" y="631.85" width="260.10" height="17.50" fill="#e6e6e6" stroke="#b6b6b6" stroke-width="0.9"/><rect x="97.45" y="651.95" width="219.50" height="17.50" fill="#e6e6e6" stroke="#b6b6b6" stroke-width="0.9"/></svg>
<div style="top:654.84px;font-size:10.4px;line-height:13.52px;color:#000;letter-spacing:-0.2px;white-space:pre;left:99.40px;">Miru 21</div>
<div style="left:318.4px;top:652.2px;width:37.4px;height:20px;background:#e1e1e1;border:0.8px solid #adadad;"></div>
<div style="left:324.8px;top:658.4px;width:23.6px;height:10px;border:1px solid #3c96e6;background:#e8f0f8;"></div>
<div style="top:554.54px;font-size:10.4px;line-height:13.52px;color:#000;letter-spacing:-0.151px;white-space:pre;left:377.50px;">Rámcová objednávka</div>
<div style="top:574.64px;font-size:10.4px;line-height:13.52px;color:#000;letter-spacing:-0.093px;white-space:pre;left:377.50px;">Objednávka odběratele</div>
<div style="top:594.54px;font-size:10.4px;line-height:13.52px;color:#000;letter-spacing:-0.186px;white-space:pre;left:377.50px;">Účetní zakázka</div>
<svg style="left:0;top:0" width="1398" height="661" viewBox="0 0 1398 661"><rect x="518.05" y="552.05" width="99.90" height="17.50" fill="#e6e6e6" stroke="#b6b6b6" stroke-width="0.9"/><rect x="606.65" y="552.05" width="11.30" height="17.50" fill="#9d9d9d" stroke="#8c8c8c" stroke-width="0.9"/></svg>
<svg style="left:609.40px;top:555.80px" width="5.80" height="9.00" viewBox="0 0 5.8 9"><path d="M2.3,0h1.2v3.4h1.7l-2.3,2.8l-2.3,-2.8h1.7z" fill="#b9b9b9"/><rect x="0.4" y="7.4" width="5" height="0.9" fill="#b4b4b4"/></svg>
<div style="top:554.94px;font-size:10.4px;line-height:13.52px;color:#000;letter-spacing:-0.2px;white-space:pre;right:795.40px;text-align:right;">0</div>
<svg style="left:0;top:0" width="1398" height="661" viewBox="0 0 1398 661"><rect x="518.05" y="571.85" width="99.90" height="17.50" fill="#e6e6e6" stroke="#b6b6b6" stroke-width="0.9"/><rect x="518.05" y="591.95" width="99.90" height="17.50" fill="#e6e6e6" stroke="#b6b6b6" stroke-width="0.9"/><rect x="606.65" y="591.95" width="11.30" height="17.50" fill="#9d9d9d" stroke="#8c8c8c" stroke-width="0.9"/></svg>
<svg style="left:609.40px;top:595.70px" width="5.80" height="9.00" viewBox="0 0 5.8 9"><path d="M2.3,0h1.2v3.4h1.7l-2.3,2.8l-2.3,-2.8h1.7z" fill="#b9b9b9"/><rect x="0.4" y="7.4" width="5" height="0.9" fill="#b4b4b4"/></svg>
<div style="top:554.54px;font-size:10.4px;line-height:13.52px;color:#000;letter-spacing:-0.19px;white-space:pre;left:657.50px;">Datum založení</div>
<div style="top:574.64px;font-size:10.4px;line-height:13.52px;color:#000;letter-spacing:-0.132px;white-space:pre;left:657.50px;">Datum zahájení</div>
<div style="top:594.54px;font-size:10.4px;line-height:13.52px;color:#000;letter-spacing:-0.107px;white-space:pre;left:657.50px;">Datum potvrzení</div>
<svg style="left:0;top:0" width="1398" height="661" viewBox="0 0 1398 661"><rect x="758.25" y="552.05" width="90.10" height="17.50" fill="#e6e6e6" stroke="#b6b6b6" stroke-width="0.9"/><rect x="837.05" y="552.05" width="11.30" height="17.50" fill="#9d9d9d" stroke="#8c8c8c" stroke-width="0.9"/></svg>
<svg style="left:839.20px;top:554.80px" width="7.00" height="11.60" viewBox="0 0 7 11.6"><rect x="0.3" y="0.3" width="6.4" height="11" fill="none" stroke="#b4b4b4" stroke-width="0.6"/><rect x="1" y="1.6" width="2.6" height="1.7" fill="#7c7c7c"/><path d="M0.3,3.6h6.4M0.3,6.2h6.4M0.3,8.8h6.4M2.5,3.6v7.7M4.6,3.6v7.7" stroke="#bcbcbc" stroke-width="0.65"/></svg>
<div style="top:554.94px;font-size:10.4px;line-height:13.52px;color:#000;letter-spacing:-0.145px;white-space:pre;left:760.20px;">31.07.2003</div>
<svg style="left:0;top:0" width="1398" height="661" viewBox="0 0 1398 661"><rect x="758.25" y="571.85" width="90.10" height="17.50" fill="#e6e6e6" stroke="#b6b6b6" stroke-width="0.9"/><rect x="837.05" y="571.85" width="11.30" height="17.50" fill="#9d9d9d" stroke="#8c8c8c" stroke-width="0.9"/></svg>
<svg style="left:839.20px;top:574.60px" width="7.00" height="11.60" viewBox="0 0 7 11.6"><rect x="0.3" y="0.3" width="6.4" height="11" fill="none" stroke="#b4b4b4" stroke-width="0.6"/><rect x="1" y="1.6" width="2.6" height="1.7" fill="#7c7c7c"/><path d="M0.3,3.6h6.4M0.3,6.2h6.4M0.3,8.8h6.4M2.5,3.6v7.7M4.6,3.6v7.7" stroke="#bcbcbc" stroke-width="0.65"/></svg>
<div style="top:574.74px;font-size:10.4px;line-height:13.52px;color:#000;letter-spacing:-0.145px;white-space:pre;left:760.20px;">31.07.2003</div>
<svg style="left:0;top:0" width="1398" height="661" viewBox="0 0 1398 661"><rect x="758.25" y="591.95" width="90.10" height="17.50" fill="#e6e6e6" stroke="#b6b6b6" stroke-width="0.9"/><rect x="837.05" y="591.95" width="11.30" height="17.50" fill="#9d9d9d" stroke="#8c8c8c" stroke-width="0.9"/></svg>
<svg style="left:839.20px;top:594.70px" width="7.00" height="11.60" viewBox="0 0 7 11.6"><rect x="0.3" y="0.3" width="6.4" height="11" fill="none" stroke="#b4b4b4" stroke-width="0.6"/><rect x="1" y="1.6" width="2.6" height="1.7" fill="#7c7c7c"/><path d="M0.3,3.6h6.4M0.3,6.2h6.4M0.3,8.8h6.4M2.5,3.6v7.7M4.6,3.6v7.7" stroke="#bcbcbc" stroke-width="0.65"/></svg>
<div style="top:594.84px;font-size:10.4px;line-height:13.52px;color:#000;letter-spacing:-0.2px;white-space:pre;left:760.20px;">00.00.0000</div>
<div style="top:554.54px;font-size:10.4px;line-height:13.52px;color:#000;letter-spacing:-0.228px;white-space:pre;left:877.50px;">Plánované splnění</div>
<div style="top:574.64px;font-size:10.4px;line-height:13.52px;color:#000;letter-spacing:-0.187px;white-space:pre;left:877.50px;">Skutečné splnění</div>
<svg style="left:0;top:0" width="1398" height="661" viewBox="0 0 1398 661"><rect x="967.45" y="552.05" width="90.50" height="17.50" fill="#e6e6e6" stroke="#b6b6b6" stroke-width="0.9"/><rect x="1046.65" y="552.05" width="11.30" height="17.50" fill="#9d9d9d" stroke="#8c8c8c" stroke-width="0.9"/></svg>
<svg style="left:1048.80px;top:554.80px" width="7.00" height="11.60" viewBox="0 0 7 11.6"><rect x="0.3" y="0.3" width="6.4" height="11" fill="none" stroke="#b4b4b4" stroke-width="0.6"/><rect x="1" y="1.6" width="2.6" height="1.7" fill="#7c7c7c"/><path d="M0.3,3.6h6.4M0.3,6.2h6.4M0.3,8.8h6.4M2.5,3.6v7.7M4.6,3.6v7.7" stroke="#bcbcbc" stroke-width="0.65"/></svg>
<div style="top:554.94px;font-size:10.4px;line-height:13.52px;color:#000;letter-spacing:-0.2px;white-space:pre;left:969.40px;">00.00.0000</div>
<svg style="left:0;top:0" width="1398" height="661" viewBox="0 0 1398 661"><rect x="967.45" y="571.85" width="90.50" height="17.50" fill="#e6e6e6" stroke="#b6b6b6" stroke-width="0.9"/><rect x="1046.65" y="571.85" width="11.30" height="17.50" fill="#9d9d9d" stroke="#8c8c8c" stroke-width="0.9"/></svg>
<svg style="left:1048.80px;top:574.60px" width="7.00" height="11.60" viewBox="0 0 7 11.6"><rect x="0.3" y="0.3" width="6.4" height="11" fill="none" stroke="#b4b4b4" stroke-width="0.6"/><rect x="1" y="1.6" width="2.6" height="1.7" fill="#7c7c7c"/><path d="M0.3,3.6h6.4M0.3,6.2h6.4M0.3,8.8h6.4M2.5,3.6v7.7M4.6,3.6v7.7" stroke="#bcbcbc" stroke-width="0.65"/></svg>
<div style="top:574.74px;font-size:10.4px;line-height:13.52px;color:#000;letter-spacing:-0.2px;white-space:pre;left:969.40px;">01.01.1900</div>
<div style="top:644.14px;font-size:10.4px;line-height:13.52px;color:#000;letter-spacing:-0.2px;white-space:pre;left:377.50px;">Platební</div>
<svg style="left:0;top:0" width="1398" height="661" viewBox="0 0 1398 661"><rect x="447.65" y="641.45" width="50.10" height="17.50" fill="#e6e6e6" stroke="#b6b6b6" stroke-width="0.9"/><rect x="486.45" y="641.45" width="11.30" height="17.50" fill="#9d9d9d" stroke="#8c8c8c" stroke-width="0.9"/></svg>
<svg style="left:489.20px;top:645.20px" width="5.80" height="9.00" viewBox="0 0 5.8 9"><path d="M2.3,0h1.2v3.4h1.7l-2.3,2.8l-2.3,-2.8h1.7z" fill="#b9b9b9"/><rect x="0.4" y="7.4" width="5" height="0.9" fill="#b4b4b4"/></svg>
<div style="top:644.34px;font-size:10.4px;line-height:13.52px;color:#000;letter-spacing:-0.2px;white-space:pre;right:915.60px;text-align:right;">1</div>
<svg style="left:0;top:0" width="1398" height="661" viewBox="0 0 1398 661"><rect x="518.05" y="641.45" width="390.10" height="17.50" fill="#e6e6e6" stroke="#b6b6b6" stroke-width="0.9"/></svg>
<div style="top:644.34px;font-size:10.4px;line-height:13.52px;color:#000;letter-spacing:-0.2px;white-space:pre;left:520.00px;">INKASI 14 dni</div>
<div style="left:941.0px;top:643.4px;width:8.2px;height:8.2px;background:#fafafa;border:0.8px solid #9a9a9a;"></div>
<svg style="left:942.40px;top:644.80px" width="7.00" height="7.00" viewBox="0 0 7 7"><path d="M0.8,3.2l1.8,2.6l3.4,-5.2" stroke="#3a56b4" stroke-width="1.1" fill="none"/></svg>
<div style="top:642.34px;font-size:10.4px;line-height:13.52px;color:#3c3c3c;letter-spacing:-0.21px;white-space:pre;left:955.00px;">Vytištěno</div>
<div style="left:577.7px;top:55.4px;width:274.6px;height:143.6px;background:#f2f2f2;border:1px solid #c9c9c9;box-shadow:1px 1px 2px rgba(0,0,0,0.14);"></div>
<svg style="left:584.00px;top:60.60px" width="9.40" height="10.90" viewBox="0 0 9.4 10.9"><rect x="0.3" y="0.3" width="8.8" height="7.2" rx="0.5" fill="#2a9ad8" stroke="#2a5f90" stroke-width="0.6"/><path d="M2.6,3.6l1.4,1.6l2.4,-3.8" stroke="#f0a020" stroke-width="1" fill="none"/><path d="M3.4,7.6h2.6l0.4,1.8h-3.4z" fill="#2b2b3a"/><rect x="1.2" y="9.4" width="7" height="1.2" rx="0.5" fill="#33334a"/></svg>
<div style="top:59.64px;font-size:12px;line-height:15.6px;color:#1a1a1a;letter-spacing:-0.056px;white-space:pre;left:606.70px;">Hromadná změna</div>
<svg style="left:582.70px;top:77.67px" width="12.40" height="12.60" viewBox="0 0 12.4 12.6"><g transform="translate(6.2,6.3)"><rect x="-1.5" y="-6.2" width="3" height="3" rx="0.8" fill="#f0a226" transform="rotate(0)"/><rect x="-1.5" y="-6.2" width="3" height="3" rx="0.8" fill="#f0a226" transform="rotate(45)"/><rect x="-1.5" y="-6.2" width="3" height="3" rx="0.8" fill="#f0a226" transform="rotate(90)"/><rect x="-1.5" y="-6.2" width="3" height="3" rx="0.8" fill="#f0a226" transform="rotate(135)"/><rect x="-1.5" y="-6.2" width="3" height="3" rx="0.8" fill="#f0a226" transform="rotate(180)"/><rect x="-1.5" y="-6.2" width="3" height="3" rx="0.8" fill="#f0a226" transform="rotate(225)"/><rect x="-1.5" y="-6.2" width="3" height="3" rx="0.8" fill="#f0a226" transform="rotate(270)"/><rect x="-1.5" y="-6.2" width="3" height="3" rx="0.8" fill="#f0a226" transform="rotate(315)"/><circle r="5" fill="#f0a226"/><circle r="3.7" fill="#2273c3"/><circle r="2.5" fill="#3a93dc"/><circle r="1.45" fill="#fff"/></g></svg>
<div style="top:77.31px;font-size:12px;line-height:15.6px;color:#1a1a1a;letter-spacing:-0.035px;white-space:pre;left:606.70px;">Uvolnění do výroby</div>
<svg style="left:582.70px;top:95.34px" width="12.40" height="12.60" viewBox="0 0 12.4 12.6"><g transform="translate(6.2,6.3)"><rect x="-1.5" y="-6.2" width="3" height="3" rx="0.8" fill="#f0a226" transform="rotate(0)"/><rect x="-1.5" y="-6.2" width="3" height="3" rx="0.8" fill="#f0a226" transform="rotate(45)"/><rect x="-1.5" y="-6.2" width="3" height="3" rx="0.8" fill="#f0a226" transform="rotate(90)"/><rect x="-1.5" y="-6.2" width="3" height="3" rx="0.8" fill="#f0a226" transform="rotate(135)"/><rect x="-1.5" y="-6.2" width="3" height="3" rx="0.8" fill="#f0a226" transform="rotate(180)"/><rect x="-1.5" y="-6.2" width="3" height="3" rx="0.8" fill="#f0a226" transform="rotate(225)"/><rect x="-1.5" y="-6.2" width="3" height="3" rx="0.8" fill="#f0a226" transform="rotate(270)"/><rect x="-1.5" y="-6.2" width="3" height="3" rx="0.8" fill="#f0a226" transform="rotate(315)"/><circle r="5" fill="#f0a226"/><circle r="3.7" fill="#2273c3"/><circle r="2.5" fill="#3a93dc"/><circle r="1.45" fill="#fff"/></g></svg>
<div style="top:94.98px;font-size:12px;line-height:15.6px;color:#1a1a1a;letter-spacing:0.0px;white-space:pre;left:606.70px;">Transformace prodejní objednávky do výroby</div>
<svg style="left:584.00px;top:113.61px" width="9.40" height="10.90" viewBox="0 0 9.4 10.9"><rect x="0.3" y="0.3" width="8.8" height="7.2" rx="0.5" fill="#2a9ad8" stroke="#2a5f90" stroke-width="0.6"/><path d="M2.6,3.6l1.4,1.6l2.4,-3.8" stroke="#f0a020" stroke-width="1" fill="none"/><path d="M3.4,7.6h2.6l0.4,1.8h-3.4z" fill="#2b2b3a"/><rect x="1.2" y="9.4" width="7" height="1.2" rx="0.5" fill="#33334a"/></svg>
<div style="top:112.65px;font-size:12px;line-height:15.6px;color:#1a1a1a;letter-spacing:-0.234px;white-space:pre;left:606.70px;">Potvrzení</div>
<svg style="left:584.00px;top:131.28px" width="9.40" height="10.90" viewBox="0 0 9.4 10.9"><rect x="0.3" y="0.3" width="8.8" height="7.2" rx="0.5" fill="#2a9ad8" stroke="#2a5f90" stroke-width="0.6"/><path d="M2.6,3.6l1.4,1.6l2.4,-3.8" stroke="#f0a020" stroke-width="1" fill="none"/><path d="M3.4,7.6h2.6l0.4,1.8h-3.4z" fill="#2b2b3a"/><rect x="1.2" y="9.4" width="7" height="1.2" rx="0.5" fill="#33334a"/></svg>
<div style="top:130.32px;font-size:12px;line-height:15.6px;color:#1a1a1a;letter-spacing:-0.29px;white-space:pre;left:606.70px;">Uzavření</div>
<svg style="left:582.70px;top:148.35px" width="12.40" height="12.60" viewBox="0 0 12.4 12.6"><g transform="translate(6.2,6.3)"><rect x="-1.5" y="-6.2" width="3" height="3" rx="0.8" fill="#f0a226" transform="rotate(0)"/><rect x="-1.5" y="-6.2" width="3" height="3" rx="0.8" fill="#f0a226" transform="rotate(45)"/><rect x="-1.5" y="-6.2" width="3" height="3" rx="0.8" fill="#f0a226" transform="rotate(90)"/><rect x="-1.5" y="-6.2" width="3" height="3" rx="0.8" fill="#f0a226" transform="rotate(135)"/><rect x="-1.5" y="-6.2" width="3" height="3" rx="0.8" fill="#f0a226" transform="rotate(180)"/><rect x="-1.5" y="-6.2" width="3" height="3" rx="0.8" fill="#f0a226" transform="rotate(225)"/><rect x="-1.5" y="-6.2" width="3" height="3" rx="0.8" fill="#f0a226" transform="rotate(270)"/><rect x="-1.5" y="-6.2" width="3" height="3" rx="0.8" fill="#f0a226" transform="rotate(315)"/><circle r="5" fill="#f0a226"/><circle r="3.7" fill="#2273c3"/><circle r="2.5" fill="#3a93dc"/><circle r="1.45" fill="#fff"/></g></svg>
<div style="top:147.99px;font-size:12px;line-height:15.6px;color:#1a1a1a;letter-spacing:-0.067px;white-space:pre;left:606.70px;">Uvolnění do realizace</div>
<svg style="left:584.00px;top:166.62px" width="9.40" height="10.90" viewBox="0 0 9.4 10.9"><rect x="0.3" y="0.3" width="8.8" height="7.2" rx="0.5" fill="#2a9ad8" stroke="#2a5f90" stroke-width="0.6"/><path d="M2.6,3.6l1.4,1.6l2.4,-3.8" stroke="#f0a020" stroke-width="1" fill="none"/><path d="M3.4,7.6h2.6l0.4,1.8h-3.4z" fill="#2b2b3a"/><rect x="1.2" y="9.4" width="7" height="1.2" rx="0.5" fill="#33334a"/></svg>
<div style="top:165.66px;font-size:12px;line-height:15.6px;color:#1a1a1a;letter-spacing:-0.19px;white-space:pre;left:606.70px;">Import řádků z XLS</div>
<svg style="left:584.00px;top:184.29px" width="9.40" height="10.90" viewBox="0 0 9.4 10.9"><rect x="0.3" y="0.3" width="8.8" height="7.2" rx="0.5" fill="#2a9ad8" stroke="#2a5f90" stroke-width="0.6"/><path d="M2.6,3.6l1.4,1.6l2.4,-3.8" stroke="#f0a020" stroke-width="1" fill="none"/><path d="M3.4,7.6h2.6l0.4,1.8h-3.4z" fill="#2b2b3a"/><rect x="1.2" y="9.4" width="7" height="1.2" rx="0.5" fill="#33334a"/></svg>
<div style="top:183.33px;font-size:12px;line-height:15.6px;color:#1a1a1a;letter-spacing:-0.06px;white-space:pre;left:606.70px;">Vytvoření zálohové faktury</div>
<svg style="left:560px;top:150px" width="140" height="50" viewBox="560 150 140 50"><path d="M574.2,162.4C572.6,166.8 571.4,173 574.8,176.8 C579.4,181.8 597,181.4 616,180.8 C642,180 664,181.4 681.6,185.4" stroke="#e8141e" stroke-width="3.7" fill="none" stroke-linecap="round"/></svg>
</div></body></html>
